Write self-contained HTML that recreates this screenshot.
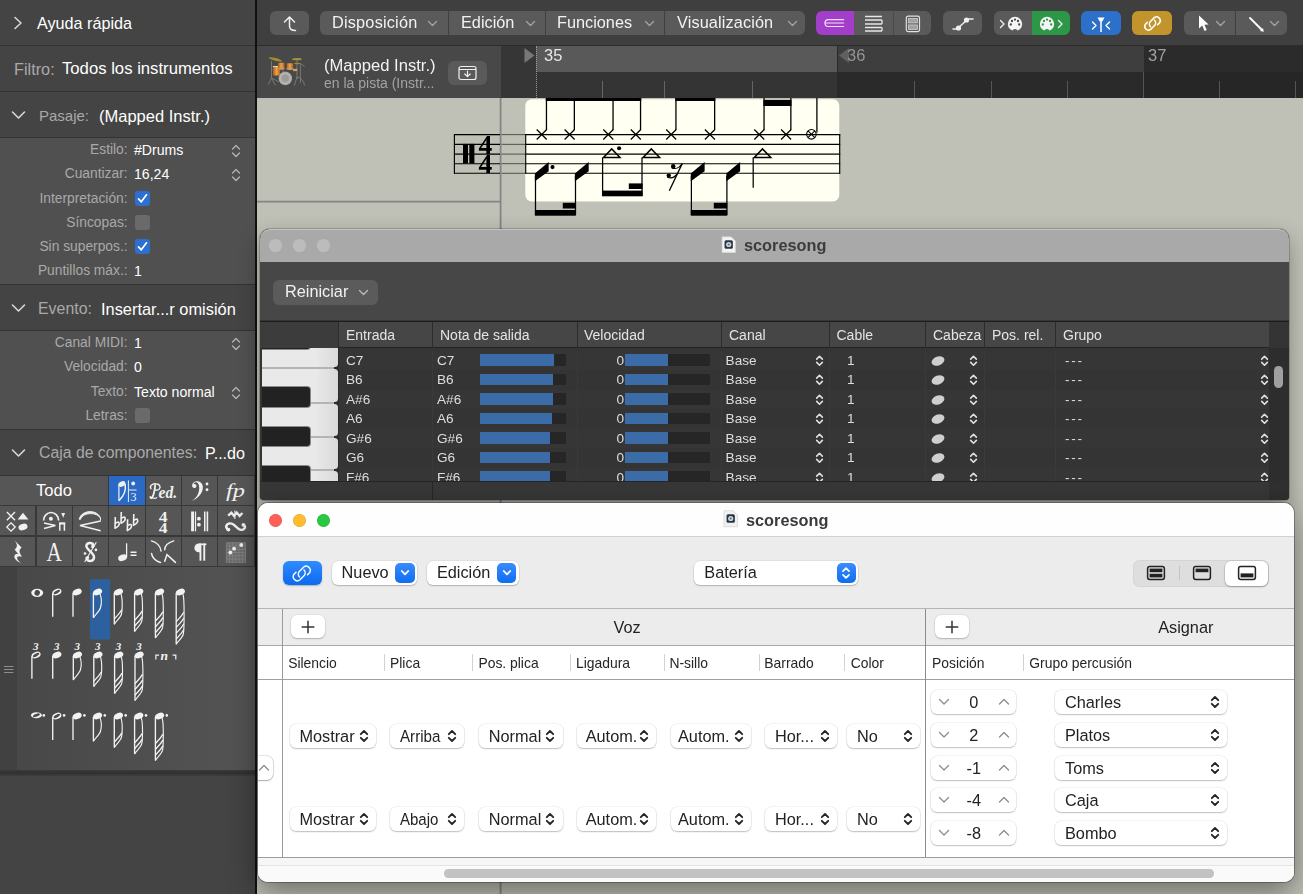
<!DOCTYPE html>
<html>
<head>
<meta charset="utf-8">
<style>
*{box-sizing:border-box;margin:0;padding:0}
html,body{width:1303px;height:894px;overflow:hidden;background:#bfc1b6;font-family:"Liberation Sans",sans-serif;}
.abs{position:absolute}
#root{position:fixed;left:0;top:0;width:1303px;height:894px;overflow:hidden}
/* ---------- left inspector ---------- */
#left{position:absolute;left:0;top:0;width:255px;height:894px;background:#444444;color:#fff}
#leftborder{position:absolute;left:255px;top:0;width:2px;height:894px;background:#111}
.lhdr{position:absolute;left:0;width:255px;height:46px;background:#444;border-bottom:1px solid #333}
.lhdr .t{position:absolute;top:0;line-height:46px;font-size:16px;white-space:nowrap}
.lhdr.d1 .t{top:1px}
.gray{color:#a9a9a9}
.prow{position:absolute;left:0;width:255px;height:24px;font-size:13.8px;line-height:24px}
.prow .l{position:absolute;right:127.4px;top:0;color:#a9a9a9;white-space:nowrap}
.prow .v{position:absolute;left:134px;top:0;color:#fff;white-space:nowrap;font-size:14.1px}
.pbg{position:absolute;left:0;width:255px;background:#505050}
.cb{position:absolute;left:135px;width:15px;height:15px;border-radius:3px}
.cb svg{display:block;position:absolute;left:0;top:0}
.cb.on{background:#2d6fd0}
.cb.off{background:#6a6a6a}

#partbox{position:absolute;left:0;top:476px;width:255px;height:91px;background:#383838}
.pc{position:absolute;background:#565656;height:29px;overflow:hidden}
.pc.sel{background:#2a6ac6}
.pc svg{position:absolute;left:0;top:0}
#notes{position:absolute;left:0;top:567px;width:255px;height:204px;background:linear-gradient(90deg,#474747,#545454)}
#notes .strip{position:absolute;left:0;top:0;width:17px;height:204px;background:#414141}
#notesep{position:absolute;left:0;top:770px;width:255px;height:6px;background:linear-gradient(#3a3a3a,#303030 50%,#3e3e3e)}
/* ---------- main ---------- */
#toolbar .seg{position:absolute;top:10.6px;height:24.4px;background:#5a5a5a;color:#f2f2f2;font-size:16.3px;line-height:24.4px;white-space:nowrap}
#toolbar .t{position:absolute;top:-1px}
#hdr{position:absolute;left:0;top:45px;width:244px;height:53px;background:#484848;border-top:1px solid #2e2e2e}
#ruler{position:absolute;left:244px;top:45px;width:802px;height:53px;background:#2a2a2a;overflow:hidden}
#score{position:absolute;left:0;top:98px;width:1046px;height:796px;background:#bfc1b6}
.win{position:absolute;overflow:hidden}
#w2{left:3px;top:229px;width:1029px;height:271px;border-radius:10px 10px 4px 4px;background:#353535;box-shadow:0 0 0 1px rgba(0,0,0,.18),0 8px 22px rgba(0,0,0,.32)}
#w2 .title{position:absolute;left:0;top:0;width:100%;height:33px;background:#a9a9a9;border-radius:10px 10px 0 0;box-shadow:inset 0 1px 0 #c4c4c4}
#w2 .tl{position:absolute;top:10px;width:12.6px;height:12.6px;border-radius:50%;background:#bcbcbc}
#w2 .bar{position:absolute;left:0;top:33px;width:100%;height:58px;background:#474747}
#w2 .th{position:absolute;left:0;top:92px;width:100%;height:27px;background:#464646;border-top:1px solid #1e1e1e;border-bottom:1px solid #242424}
#w2 .th span{position:absolute;top:0;line-height:26px;font-size:14px;color:#e4e4e4;white-space:nowrap}
#w2 .th i{position:absolute;top:0;width:1px;height:26px;background:#2c2c2c}
#w2 .row{position:absolute;left:79px;width:931px;height:19.45px;font-size:13.6px;color:#dedede;line-height:20px}
#w2 .row span{position:absolute;top:0;white-space:nowrap}
#w2 .row b{position:absolute;display:block}

#w3{left:1px;top:503px;width:1036px;height:379px;border-radius:10px;background:#fff;box-shadow:0 0 0 1px rgba(0,0,0,.28),0 10px 30px rgba(0,0,0,.45)}
#w3 .title{position:absolute;left:0;top:0;width:100%;height:34px;background:#fefefe;border-bottom:1px solid #d0d0d0}
#w3 .tl{position:absolute;top:10.5px;width:13px;height:13px;border-radius:50%}
#w3 .bar{position:absolute;left:0;top:34px;width:100%;height:72px;background:#ececec}
#w3 .sec{position:absolute;left:0;top:104.9px;width:100%;height:38.1px;background:#ececec;border-top:1.5px solid #b4b4b4;border-bottom:1px solid #a9a9a9}
#w3 .ch{position:absolute;left:0;top:143px;width:100%;height:34px;background:#fff;border-bottom:1px solid #a0a0a0}
#w3 .ch span{position:absolute;top:0;line-height:34px;font-size:13.9px;color:#262626;white-space:nowrap}
#w3 .ch i{position:absolute;top:8px;width:1px;height:17px;background:#d2d2d2}
.pop{position:absolute;height:24px;background:#fff;border-radius:6px;box-shadow:0 0 0 0.5px rgba(0,0,0,.09),0 1px 1.5px rgba(0,0,0,.22);font-size:16.3px;line-height:24px;color:#222;white-space:nowrap}
.pop span{position:absolute;top:0}
.pop svg{position:absolute}
.bsq{position:absolute;top:2.4px;width:19.2px;height:19.2px;border-radius:5px;background:linear-gradient(#3a8cff,#0f6df0)}
.ud2{position:absolute;top:3px;width:9px;height:13.5px}


#main{position:absolute;left:257px;top:0;width:1046px;height:894px}
#toolbar{position:absolute;left:0;top:0;width:1046px;height:45px;background:#3f3f3f}
.tb{position:absolute;top:10px;height:25px;background:#5b5b5b;border-radius:6px;color:#fff;font-size:16px;line-height:25px}
</style>
</head>
<body>
<div id="root">

<!-- LEFT INSPECTOR -->
<div id="left">
<!-- header rows -->
<div class="lhdr" style="top:0"><svg class="abs" style="left:13px;top:16px" width="10" height="14" viewBox="0 0 10 14"><path d="M2 1.5 L8 7 L2 12.5" fill="none" stroke="#d8d8d8" stroke-width="1.6" stroke-linecap="round" stroke-linejoin="round"/></svg><span class="t" style="left:37px;font-size:16.2px">Ayuda rápida</span></div>
<div class="lhdr" style="top:46px"><span class="t gray" style="left:14px;font-size:16.3px">Filtro:</span><span class="t" style="left:62px;font-size:16.7px">Todos los instrumentos</span></div>
<div class="lhdr d1" style="top:92px"><svg class="abs" style="left:11px;top:18px" width="15" height="10" viewBox="0 0 15 10"><path d="M1.5 2 L7.5 8 L13.5 2" fill="none" stroke="#d8d8d8" stroke-width="1.6" stroke-linecap="round" stroke-linejoin="round"/></svg><span class="t gray" style="left:39px;font-size:15px">Pasaje:</span><span class="t" style="left:99px;font-size:16.5px">(Mapped Instr.)</span></div>

<div class="pbg" style="top:138px;height:146px"></div>
<div class="prow" style="top:138px"><span class="l">Estilo:</span><span class="v">#Drums</span><svg class="abs ud" style="left:231px;top:6px" width="10" height="14" viewBox="0 0 10 14"><path d="M1.5 5 L5 1.5 L8.5 5 M1.5 9 L5 12.5 L8.5 9" fill="none" stroke="#b5b5b5" stroke-width="1.3" stroke-linecap="round" stroke-linejoin="round"/></svg></div>
<div class="prow" style="top:162px"><span class="l">Cuantizar:</span><span class="v">16,24</span><svg class="abs ud" style="left:231px;top:6px" width="10" height="14" viewBox="0 0 10 14"><path d="M1.5 5 L5 1.5 L8.5 5 M1.5 9 L5 12.5 L8.5 9" fill="none" stroke="#b5b5b5" stroke-width="1.3" stroke-linecap="round" stroke-linejoin="round"/></svg></div>
<div class="prow" style="top:187px"><span class="l">Interpretación:</span><div class="cb on" style="top:4px"><svg width="15" height="15" viewBox="0 0 15 15"><path d="M3.5 7.8 L6.3 10.8 L11.5 3.8" fill="none" stroke="#fff" stroke-width="1.7" stroke-linecap="round" stroke-linejoin="round"/></svg></div></div>
<div class="prow" style="top:211px"><span class="l">Síncopas:</span><div class="cb off" style="top:4px"></div></div>
<div class="prow" style="top:235px"><span class="l">Sin superpos.:</span><div class="cb on" style="top:4px"><svg width="15" height="15" viewBox="0 0 15 15"><path d="M3.5 7.8 L6.3 10.8 L11.5 3.8" fill="none" stroke="#fff" stroke-width="1.7" stroke-linecap="round" stroke-linejoin="round"/></svg></div></div>
<div class="prow" style="top:259px"><span class="l">Puntillos máx.:</span><span class="v">1</span></div>

<div class="lhdr d1" style="top:284px;height:47px;border-top:1px solid #333"><svg class="abs" style="left:11px;top:18px" width="15" height="10" viewBox="0 0 15 10"><path d="M1.5 2 L7.5 8 L13.5 2" fill="none" stroke="#d8d8d8" stroke-width="1.6" stroke-linecap="round" stroke-linejoin="round"/></svg><span class="t gray" style="left:38px;font-size:15.9px">Evento:</span><span class="t" style="left:101px;font-size:16.4px">Insertar...r omisión</span></div>

<div class="pbg" style="top:331px;height:98px"></div>
<div class="prow" style="top:331px"><span class="l">Canal MIDI:</span><span class="v">1</span><svg class="abs ud" style="left:231px;top:6px" width="10" height="14" viewBox="0 0 10 14"><path d="M1.5 5 L5 1.5 L8.5 5 M1.5 9 L5 12.5 L8.5 9" fill="none" stroke="#b5b5b5" stroke-width="1.3" stroke-linecap="round" stroke-linejoin="round"/></svg></div>
<div class="prow" style="top:355px"><span class="l">Velocidad:</span><span class="v">0</span></div>
<div class="prow" style="top:380px"><span class="l">Texto:</span><span class="v">Texto normal</span><svg class="abs ud" style="left:231px;top:6px" width="10" height="14" viewBox="0 0 10 14"><path d="M1.5 5 L5 1.5 L8.5 5 M1.5 9 L5 12.5 L8.5 9" fill="none" stroke="#b5b5b5" stroke-width="1.3" stroke-linecap="round" stroke-linejoin="round"/></svg></div>
<div class="prow" style="top:404px"><span class="l">Letras:</span><div class="cb off" style="top:4px"></div></div>

<div class="lhdr" style="top:429px;height:47px;border-top:1px solid #333"><svg class="abs" style="left:11px;top:18px" width="15" height="10" viewBox="0 0 15 10"><path d="M1.5 2 L7.5 8 L13.5 2" fill="none" stroke="#d8d8d8" stroke-width="1.6" stroke-linecap="round" stroke-linejoin="round"/></svg><span class="t gray" style="left:39px;font-size:15.8px">Caja de componentes:</span><span class="t" style="left:205px;font-size:16.1px">P...do</span></div>

<!-- PARTBOX -->
<div id="partbox"><div class="pc" style="left:0px;top:0px;width:108px;height:29px"><div style="position:absolute;left:0;top:0;width:108px;text-align:center;line-height:30px;font-size:16.6px;color:#fff">Todo</div></div><div class="pc sel" style="left:109px;top:0px;width:35.5px;height:29px"><svg width="36" height="30" viewBox="0 0 36 30"><path d="M9.9 8 V24.6" stroke="#f0f0f0" stroke-width="1.2" fill="none"/><ellipse cx="12.9" cy="8" rx="3.7" ry="2.5" transform="rotate(-25 12.9 8)" fill="#f0f0f0"/>
<path d="M16.2 8.4 C17 14 14.8 20 10.2 24.4" fill="none" stroke="#f0f0f0" stroke-width="1.5" stroke-linecap="round"/>
<path d="M19.4 4.4 V26" stroke="#f0f0f0" stroke-width="1"/><circle cx="24.2" cy="7.5" r="1.9" fill="#f0f0f0"/><path d="M20 14 H27.6" stroke="#f0f0f0" stroke-width="1"/>
<text x="21.6" y="25" font-family="Liberation Serif" font-size="12" fill="#f0f0f0">3</text></svg></div><div class="pc" style="left:146px;top:0px;width:35px;height:29px"><svg width="35" height="30" viewBox="0 0 35 30"><g fill="none" stroke="#f0f0f0" stroke-linecap="round"><path d="M9.2 9.2 C8.6 13.5 8.4 18 6.2 21.6 C5.4 22.6 4.2 22.2 4.4 21" stroke-width="1.8"/>
<path d="M5 12.6 C3.2 10.2 6 7.4 10 7.8 C13.6 8 15 10.6 13.4 12.8 C12.2 14.4 10 14.6 9 13.6" stroke-width="1.4"/><path d="M6.6 21.8 C8 22.6 9.6 22.6 10.6 21.6" stroke-width="1.3"/></g>
<text x="12.6" y="22.3" font-family="Liberation Serif" font-style="italic" font-weight="bold" font-size="16.5" fill="#f0f0f0" textLength="18.6" lengthAdjust="spacingAndGlyphs">ed.</text></svg></div><div class="pc" style="left:182px;top:0px;width:35px;height:29px"><svg width="35" height="30" viewBox="0 0 35 30"><path d="M10.2 10.6 C9.4 6.6 13.4 4.4 16.8 5.4 C20.6 6.6 21.6 10.6 20.4 14.4 C18.8 19.4 14.6 22.8 9.6 25.2 C14.4 22 17 17.8 17.2 12.8 C17.4 9 16.2 6.4 14.2 6.2 C12.6 6 11.6 7.2 11.6 8.2 C13.4 7.6 14.8 8.8 14.4 10.4 C13.8 12.4 10.8 12.6 10.2 10.6z" fill="#f0f0f0"/>
<circle cx="25" cy="8" r="1.45" fill="#f0f0f0"/><circle cx="25" cy="13.7" r="1.45" fill="#f0f0f0"/></svg></div><div class="pc" style="left:218px;top:0px;width:36px;height:29px"><svg width="36" height="30" viewBox="0 0 36 30"><text x="8" y="20.6" font-family="Liberation Serif" font-style="italic" font-size="19.5" fill="#f0f0f0" textLength="19" lengthAdjust="spacingAndGlyphs">fp</text></svg></div><div class="pc" style="left:0px;top:30.3px;width:35px;height:28.8px"><svg width="35" height="29" viewBox="0 0 35 29"><path d="M6.9 6 L15 14.2 M15 6 L6.9 14.2" stroke="#f0f0f0" stroke-width="1.4"/><path d="M17.6 13.6 L23 6.7 L28.4 13.6z" fill="#f0f0f0"/>
<path d="M11 16.8 L15.2 21 L11 25.2 L6.8 21z" fill="none" stroke="#f0f0f0" stroke-width="1.3"/><ellipse cx="23" cy="21" rx="4.6" ry="3.2" transform="rotate(-15 23 21)" fill="#f0f0f0"/></svg></div><div class="pc" style="left:37px;top:30.3px;width:35px;height:28.8px"><svg width="35" height="29" viewBox="0 0 35 29"><path d="M6.6 14.4 A7.5 7.9 0 0 1 21.6 14.4" fill="none" stroke="#f0f0f0" stroke-width="1.7"/><circle cx="13.9" cy="12.7" r="2" fill="#f0f0f0"/>
<path d="M7 17 L18.4 19.6 L7 22.4" fill="none" stroke="#f0f0f0" stroke-width="1.5"/><path d="M24.3 6.9 h3.8 l-1.9 4.8z" fill="#f0f0f0"/>
<path d="M22.8 24.8 V17.6 H27.4 V24.8" fill="none" stroke="#f0f0f0" stroke-width="1.5"/><path d="M22 17.4 H28.2" stroke="#f0f0f0" stroke-width="2"/></svg></div><div class="pc" style="left:73px;top:30.3px;width:35px;height:28.8px"><svg width="35" height="29" viewBox="0 0 35 29"><path d="M6.2 13.2 C8.5 3.4 25 3 27.6 12.6 C24.4 5.6 9.8 6 7.4 13.4z" fill="#f0f0f0" stroke="#f0f0f0" stroke-width="0.9" stroke-linejoin="round"/><path d="M27.5 12 V14.8" stroke="#f0f0f0" stroke-width="1"/>
<path d="M27.6 15 L7 19.6 L27.6 24.8" fill="none" stroke="#f0f0f0" stroke-width="1.5" stroke-linejoin="miter"/></svg></div><div class="pc" style="left:109px;top:30.3px;width:35.5px;height:28.8px"><svg width="36" height="29" viewBox="0 0 36 29"><path d="M6.3 11 L6 22.3 C9 20.8 10.6 18.6 10.1 17 C9.6 15.6 7.4 16 6.1 17.8" fill="none" stroke="#f0f0f0" stroke-width="1.6" stroke-linejoin="round"/><path d="M12.3 6 L12 17.3 C15 15.8 16.6 13.6 16.1 12 C15.6 10.6 13.4 11 12.1 12.8" fill="none" stroke="#f0f0f0" stroke-width="1.6" stroke-linejoin="round"/><path d="M18.6 13.3 L18.3 24.6 C21.3 23.1 22.9 20.9 22.4 19.3 C21.900000000000002 17.9 19.7 18.3 18.400000000000002 20.1" fill="none" stroke="#f0f0f0" stroke-width="1.6" stroke-linejoin="round"/><path d="M24.8 8 L24.5 19.3 C27.5 17.8 29.1 15.6 28.6 14 C28.1 12.6 25.9 13 24.6 14.8" fill="none" stroke="#f0f0f0" stroke-width="1.6" stroke-linejoin="round"/></svg></div><div class="pc" style="left:146px;top:30.3px;width:35px;height:28.8px"><svg width="35" height="29" viewBox="0 0 35 29"><text x="12.8" y="15.7" font-family="Liberation Serif" font-weight="bold" font-size="14.2" fill="#f0f0f0" textLength="8.8" lengthAdjust="spacingAndGlyphs">4</text><text x="12.8" y="26.5" font-family="Liberation Serif" font-weight="bold" font-size="14.2" fill="#f0f0f0" textLength="8.8" lengthAdjust="spacingAndGlyphs">4</text></svg></div><div class="pc" style="left:182px;top:30.3px;width:35px;height:28.8px"><svg width="35" height="29" viewBox="0 0 35 29"><rect x="9.1" y="5.5" width="2.9" height="19.8" fill="#f0f0f0"/><rect x="12.9" y="5.5" width="1.2" height="19.8" fill="#f0f0f0"/><circle cx="16.9" cy="12.7" r="1.9" fill="#f0f0f0"/><circle cx="16.9" cy="18.7" r="1.9" fill="#f0f0f0"/><rect x="22" y="5.5" width="1.5" height="19.8" fill="#f0f0f0"/><rect x="24.6" y="5.5" width="1.6" height="19.8" fill="#f0f0f0"/></svg></div><div class="pc" style="left:218px;top:30.3px;width:36px;height:28.8px"><svg width="36" height="29" viewBox="0 0 36 29"><path d="M10.2 9.6 L13.4 6.6 L16 10 L18.8 6.6 L21.6 10 L24.4 7" fill="none" stroke="#f0f0f0" stroke-width="2.3" stroke-linejoin="miter"/><path d="M16.9 4.6 V13" stroke="#f0f0f0" stroke-width="1.1"/>
<path d="M9.2 23 C6.4 19.6 10.4 16 14.6 18 C17.4 19.4 19 22.6 22 23.6 C25.6 24.8 28 21.6 26.4 19.4" fill="none" stroke="#f0f0f0" stroke-width="2.4" stroke-linecap="round"/>
<circle cx="10.4" cy="23.6" r="1.9" fill="#f0f0f0"/><circle cx="25.4" cy="18.8" r="1.9" fill="#f0f0f0"/></svg></div><div class="pc" style="left:0px;top:61px;width:35px;height:28.8px"><svg width="35" height="29" viewBox="0 0 35 29"><path d="M14.6 3.4 L21.6 10.6 C19 13 18.6 15 22 19.8 C19 18.6 16.6 19.4 17.2 21.6 C17.6 23.2 19.2 24.6 21 26.2 C16.4 24.4 13.4 21.2 14.6 18.6 C15.4 17 17.2 16.8 18.6 17.4 L14.6 12.6 C17.6 10.2 17.8 7.6 14.6 3.4z" fill="#f0f0f0"/></svg></div><div class="pc" style="left:37px;top:61px;width:35px;height:28.8px"><svg width="35" height="29" viewBox="0 0 35 29"><text transform="translate(9.6 24) scale(0.8 1)" font-family="Liberation Serif" font-size="26.6" fill="#f0f0f0">A</text></svg></div><div class="pc" style="left:73px;top:61px;width:35px;height:28.8px"><svg width="35" height="29" viewBox="0 0 35 29"><path d="M20.4 9 C20.6 5.4 14.2 4.6 13.4 8.6 C12.6 13 21.6 15.4 21 20.6 C20.4 25.2 13.6 24.8 13.6 21" fill="none" stroke="#f0f0f0" stroke-width="2.5" stroke-linecap="round"/>
<circle cx="19.6" cy="9.6" r="1.6" fill="#f0f0f0"/><circle cx="14.6" cy="20.6" r="1.6" fill="#f0f0f0"/>
<path d="M23.3 5.2 L11.7 25" stroke="#f0f0f0" stroke-width="1.1"/><circle cx="22.9" cy="12.9" r="1.35" fill="#f0f0f0"/><circle cx="12" cy="16.5" r="1.35" fill="#f0f0f0"/></svg></div><div class="pc" style="left:109px;top:61px;width:35.5px;height:28.8px"><svg width="36" height="29" viewBox="0 0 36 29"><path d="M17.6 6.3 V20.2" stroke="#f0f0f0" stroke-width="1.3"/><ellipse cx="13.6" cy="20.7" rx="4.6" ry="3.1" transform="rotate(-22 13.6 20.7)" fill="#f0f0f0"/><path d="M21.5 15.2 h6 M21.5 18.2 h6" stroke="#f0f0f0" stroke-width="1.4"/></svg></div><div class="pc" style="left:146px;top:61px;width:35px;height:28.8px"><svg width="35" height="29" viewBox="0 0 35 29"><g fill="none" stroke="#f0f0f0" stroke-width="1.5" stroke-linecap="round"><path d="M5.5 3.9 C10.6 5.4 14.6 9.4 15 14"/><path d="M27.7 3.9 C22.6 5.4 18.8 8.6 18.7 12.8"/><path d="M5.5 16.4 C6.2 21 10 24.6 14.5 25.4"/><path d="M18.7 24.2 L21 17.6 L29.4 25.4"/></g></svg></div><div class="pc" style="left:182px;top:61px;width:35px;height:28.8px"><svg width="35" height="29" viewBox="0 0 35 29"><path d="M17.4 6.5 h7 v1.7 h-7z" fill="#f0f0f0"/><rect x="17.5" y="6.5" width="1.9" height="17.2" fill="#f0f0f0"/><rect x="21.3" y="6.5" width="1.9" height="17.2" fill="#f0f0f0"/><path d="M18 6.5 h-1.2 a4.4 4.4 0 0 0 0 8.8 h1.2z" fill="#f0f0f0"/></svg></div><div class="pc" style="left:218px;top:61px;width:36px;height:28.8px"><svg width="36" height="29" viewBox="0 0 36 29"><rect x="8.3" y="5.7" width="19.2" height="19.7" fill="#6c6c6c"/><path d="M8.3 5.7 v19.7" stroke="#858585" stroke-width="0.8"/><path d="M8.3 5.7 h19.2" stroke="#858585" stroke-width="0.8"/><path d="M11.5 5.7 v19.7" stroke="#858585" stroke-width="0.8"/><path d="M8.3 9.0 h19.2" stroke="#858585" stroke-width="0.8"/><path d="M14.7 5.7 v19.7" stroke="#858585" stroke-width="0.8"/><path d="M8.3 12.3 h19.2" stroke="#858585" stroke-width="0.8"/><path d="M17.9 5.7 v19.7" stroke="#858585" stroke-width="0.8"/><path d="M8.3 15.5 h19.2" stroke="#858585" stroke-width="0.8"/><path d="M21.1 5.7 v19.7" stroke="#858585" stroke-width="0.8"/><path d="M8.3 18.8 h19.2" stroke="#858585" stroke-width="0.8"/><path d="M24.3 5.7 v19.7" stroke="#858585" stroke-width="0.8"/><path d="M8.3 22.1 h19.2" stroke="#858585" stroke-width="0.8"/><path d="M27.5 5.7 v19.7" stroke="#858585" stroke-width="0.8"/><path d="M8.3 25.4 h19.2" stroke="#858585" stroke-width="0.8"/><circle cx="23.3" cy="8" r="1.9" fill="#f0f0f0"/><circle cx="16.1" cy="11.7" r="1.9" fill="#f0f0f0"/><circle cx="12.3" cy="15.5" r="1.9" fill="#f0f0f0"/></svg></div></div>
<!-- NOTES -->
<div id="notes"><div class="strip"></div><svg class="abs" style="left:0;top:0" width="255" height="204" viewBox="0 0 255 204"><rect x="90" y="12.3" width="20.2" height="60.3" rx="2" fill="#2d609f"/><ellipse cx="37.2" cy="25.799999999999955" rx="6" ry="4.1" fill="#f2f2f2"/><ellipse cx="37.2" cy="25.799999999999955" rx="2.7" ry="2.9" transform="rotate(25 37.2 25.799999999999955)" fill="#4b4b4b"/><path d="M52.7 26 V49.7" stroke="#f2f2f2" stroke-width="1.35" fill="none"/><ellipse cx="56.900000000000006" cy="25" rx="4.7" ry="3.1" transform="rotate(-22 56.900000000000006 25)" fill="#f2f2f2"/><ellipse cx="56.900000000000006" cy="25" rx="3.5" ry="1.35" transform="rotate(-28 56.900000000000006 25)" fill="#4d4d4d"/><path d="M73 26 V49.7" stroke="#f2f2f2" stroke-width="1.35" fill="none"/><ellipse cx="77.2" cy="25" rx="4.7" ry="3.1" transform="rotate(-22 77.2 25)" fill="#f2f2f2"/><path d="M93.4 26 V50.8" stroke="#f2f2f2" stroke-width="1.35" fill="none"/><ellipse cx="97.60000000000001" cy="25" rx="4.7" ry="3.1" transform="rotate(-22 97.60000000000001 25)" fill="#f2f2f2"/><path d="M100.2 27.4 C101.80000000000001 32 101.50000000000001 37.3 100.4 41.0 C99.4 44.4 95.0 47.8 93.60000000000001 50.5" fill="none" stroke="#f2f2f2" stroke-width="1.15" stroke-linecap="round"/><path d="M114.3 26 V57.3" stroke="#f2f2f2" stroke-width="1.35" fill="none"/><ellipse cx="118.5" cy="25" rx="4.7" ry="3.1" transform="rotate(-22 118.5 25)" fill="#f2f2f2"/><path d="M121.1 27.4 C122.7 32 122.4 43.8 121.3 47.5 C120.3 50.9 115.89999999999999 54.3 114.5 57.0" fill="none" stroke="#f2f2f2" stroke-width="1.15" stroke-linecap="round"/><path d="M114.6 51.55 C116.89999999999999 48.949999999999996 119.7 46.55 121.6 42.949999999999996" fill="none" stroke="#f2f2f2" stroke-width="1.3" stroke-linecap="round"/><path d="M134.6 26 V64.5" stroke="#f2f2f2" stroke-width="1.35" fill="none"/><ellipse cx="138.79999999999998" cy="25" rx="4.7" ry="3.1" transform="rotate(-22 138.79999999999998 25)" fill="#f2f2f2"/><path d="M141.39999999999998 27.4 C142.99999999999997 32 142.7 51.0 141.6 54.7 C140.6 58.1 136.2 61.5 134.79999999999998 64.2" fill="none" stroke="#f2f2f2" stroke-width="1.15" stroke-linecap="round"/><path d="M134.9 58.75 C137.2 56.15 140.0 53.75 141.89999999999998 50.15" fill="none" stroke="#f2f2f2" stroke-width="1.3" stroke-linecap="round"/><path d="M134.9 53.0 C137.2 50.4 140.0 48.0 141.89999999999998 44.4" fill="none" stroke="#f2f2f2" stroke-width="1.3" stroke-linecap="round"/><path d="M155.4 26 V71" stroke="#f2f2f2" stroke-width="1.35" fill="none"/><ellipse cx="159.6" cy="25" rx="4.7" ry="3.1" transform="rotate(-22 159.6 25)" fill="#f2f2f2"/><path d="M162.2 27.4 C163.79999999999998 32 163.5 57.5 162.4 61.2 C161.4 64.6 157.0 68 155.6 70.7" fill="none" stroke="#f2f2f2" stroke-width="1.15" stroke-linecap="round"/><path d="M155.70000000000002 65.25 C158.0 62.65 160.8 60.25 162.7 56.65" fill="none" stroke="#f2f2f2" stroke-width="1.3" stroke-linecap="round"/><path d="M155.70000000000002 59.5 C158.0 56.9 160.8 54.5 162.7 50.9" fill="none" stroke="#f2f2f2" stroke-width="1.3" stroke-linecap="round"/><path d="M155.70000000000002 53.75 C158.0 51.15 160.8 48.75 162.7 45.15" fill="none" stroke="#f2f2f2" stroke-width="1.3" stroke-linecap="round"/><path d="M176.2 26 V77.3" stroke="#f2f2f2" stroke-width="1.35" fill="none"/><ellipse cx="180.39999999999998" cy="25" rx="4.7" ry="3.1" transform="rotate(-22 180.39999999999998 25)" fill="#f2f2f2"/><path d="M182.99999999999997 27.4 C184.59999999999997 32 184.29999999999998 63.8 183.2 67.5 C182.2 70.89999999999999 177.79999999999998 74.3 176.39999999999998 77.0" fill="none" stroke="#f2f2f2" stroke-width="1.15" stroke-linecap="round"/><path d="M176.5 71.55 C178.79999999999998 68.95 181.6 66.55 183.49999999999997 62.949999999999996" fill="none" stroke="#f2f2f2" stroke-width="1.3" stroke-linecap="round"/><path d="M176.5 65.8 C178.79999999999998 63.199999999999996 181.6 60.8 183.49999999999997 57.199999999999996" fill="none" stroke="#f2f2f2" stroke-width="1.3" stroke-linecap="round"/><path d="M176.5 60.05 C178.79999999999998 57.449999999999996 181.6 55.05 183.49999999999997 51.449999999999996" fill="none" stroke="#f2f2f2" stroke-width="1.3" stroke-linecap="round"/><path d="M176.5 54.3 C178.79999999999998 51.699999999999996 181.6 49.3 183.49999999999997 45.699999999999996" fill="none" stroke="#f2f2f2" stroke-width="1.3" stroke-linecap="round"/><path d="M31.9 89 V111.7" stroke="#f2f2f2" stroke-width="1.35" fill="none"/><ellipse cx="36.1" cy="88" rx="4.7" ry="3.1" transform="rotate(-22 36.1 88)" fill="#f2f2f2"/><ellipse cx="36.1" cy="88" rx="3.5" ry="1.35" transform="rotate(-28 36.1 88)" fill="#4d4d4d"/><text x="33.1" y="83.29999999999995" font-family="Liberation Serif" font-style="italic" font-weight="bold" font-size="11" fill="#f2f2f2">3</text><path d="M52.7 89 V111.7" stroke="#f2f2f2" stroke-width="1.35" fill="none"/><ellipse cx="56.900000000000006" cy="88" rx="4.7" ry="3.1" transform="rotate(-22 56.900000000000006 88)" fill="#f2f2f2"/><text x="53.900000000000006" y="83.29999999999995" font-family="Liberation Serif" font-style="italic" font-weight="bold" font-size="11" fill="#f2f2f2">3</text><path d="M73.3 89 V113" stroke="#f2f2f2" stroke-width="1.35" fill="none"/><ellipse cx="77.5" cy="88" rx="4.7" ry="3.1" transform="rotate(-22 77.5 88)" fill="#f2f2f2"/><path d="M80.1 90.4 C81.7 95 81.4 99.5 80.3 103.2 C79.3 106.6 74.89999999999999 110 73.5 112.7" fill="none" stroke="#f2f2f2" stroke-width="1.15" stroke-linecap="round"/><text x="74.5" y="83.29999999999995" font-family="Liberation Serif" font-style="italic" font-weight="bold" font-size="11" fill="#f2f2f2">3</text><path d="M93.8 89 V119.6" stroke="#f2f2f2" stroke-width="1.35" fill="none"/><ellipse cx="98.0" cy="88" rx="4.7" ry="3.1" transform="rotate(-22 98.0 88)" fill="#f2f2f2"/><path d="M100.6 90.4 C102.2 95 101.9 106.1 100.8 109.8 C99.8 113.19999999999999 95.39999999999999 116.6 94.0 119.3" fill="none" stroke="#f2f2f2" stroke-width="1.15" stroke-linecap="round"/><path d="M94.1 113.85 C96.39999999999999 111.25 99.2 108.85 101.1 105.25" fill="none" stroke="#f2f2f2" stroke-width="1.3" stroke-linecap="round"/><text x="95.0" y="83.29999999999995" font-family="Liberation Serif" font-style="italic" font-weight="bold" font-size="11" fill="#f2f2f2">3</text><path d="M114.6 89 V126.5" stroke="#f2f2f2" stroke-width="1.35" fill="none"/><ellipse cx="118.8" cy="88" rx="4.7" ry="3.1" transform="rotate(-22 118.8 88)" fill="#f2f2f2"/><path d="M121.39999999999999 90.4 C123.0 95 122.7 113.0 121.6 116.7 C120.6 120.1 116.19999999999999 123.5 114.8 126.2" fill="none" stroke="#f2f2f2" stroke-width="1.15" stroke-linecap="round"/><path d="M114.89999999999999 120.75 C117.19999999999999 118.15 120.0 115.75 121.89999999999999 112.15" fill="none" stroke="#f2f2f2" stroke-width="1.3" stroke-linecap="round"/><path d="M114.89999999999999 115.0 C117.19999999999999 112.4 120.0 110.0 121.89999999999999 106.4" fill="none" stroke="#f2f2f2" stroke-width="1.3" stroke-linecap="round"/><text x="115.8" y="83.29999999999995" font-family="Liberation Serif" font-style="italic" font-weight="bold" font-size="11" fill="#f2f2f2">3</text><path d="M135 89 V133.5" stroke="#f2f2f2" stroke-width="1.35" fill="none"/><ellipse cx="139.2" cy="88" rx="4.7" ry="3.1" transform="rotate(-22 139.2 88)" fill="#f2f2f2"/><path d="M141.79999999999998 90.4 C143.39999999999998 95 143.1 120.0 142.0 123.7 C141.0 127.1 136.6 130.5 135.2 133.2" fill="none" stroke="#f2f2f2" stroke-width="1.15" stroke-linecap="round"/><path d="M135.3 127.75 C137.6 125.15 140.4 122.75 142.29999999999998 119.15" fill="none" stroke="#f2f2f2" stroke-width="1.3" stroke-linecap="round"/><path d="M135.3 122.0 C137.6 119.4 140.4 117.0 142.29999999999998 113.4" fill="none" stroke="#f2f2f2" stroke-width="1.3" stroke-linecap="round"/><path d="M135.3 116.25 C137.6 113.65 140.4 111.25 142.29999999999998 107.65" fill="none" stroke="#f2f2f2" stroke-width="1.3" stroke-linecap="round"/><text x="136.2" y="83.29999999999995" font-family="Liberation Serif" font-style="italic" font-weight="bold" font-size="11" fill="#f2f2f2">3</text><path d="M155.9 659.6 v-4.4 h3.2 M175.8 659.6 v-4.4 h-3.2" transform="translate(0 -567)" stroke="#f2f2f2" stroke-width="1.2" fill="none"/><text x="160.6" y="92.60000000000002" font-family="Liberation Serif" font-style="italic" font-weight="bold" font-size="13.5" fill="#f2f2f2">n</text><ellipse cx="36.4" cy="148.20000000000005" rx="5.4" ry="3" fill="#f2f2f2"/><ellipse cx="36.4" cy="148.20000000000005" rx="3.6" ry="1.4" transform="rotate(-20 36.4 148.20000000000005)" fill="#4b4b4b"/><circle cx="43.8" cy="148.39999999999998" r="1.3" fill="#f2f2f2"/><path d="M52.7 150 V173" stroke="#f2f2f2" stroke-width="1.35" fill="none"/><ellipse cx="56.900000000000006" cy="149" rx="4.7" ry="3.1" transform="rotate(-22 56.900000000000006 149)" fill="#f2f2f2"/><ellipse cx="56.900000000000006" cy="149" rx="3.5" ry="1.35" transform="rotate(-28 56.900000000000006 149)" fill="#4d4d4d"/><circle cx="64.10000000000001" cy="148.39999999999998" r="1.3" fill="#f2f2f2"/><path d="M73 150 V173" stroke="#f2f2f2" stroke-width="1.35" fill="none"/><ellipse cx="77.2" cy="149" rx="4.7" ry="3.1" transform="rotate(-22 77.2 149)" fill="#f2f2f2"/><circle cx="84.4" cy="148.39999999999998" r="1.3" fill="#f2f2f2"/><path d="M93.4 150 V174.3" stroke="#f2f2f2" stroke-width="1.35" fill="none"/><ellipse cx="97.60000000000001" cy="149" rx="4.7" ry="3.1" transform="rotate(-22 97.60000000000001 149)" fill="#f2f2f2"/><path d="M100.2 151.4 C101.80000000000001 156 101.50000000000001 160.8 100.4 164.5 C99.4 167.9 95.0 171.3 93.60000000000001 174.0" fill="none" stroke="#f2f2f2" stroke-width="1.15" stroke-linecap="round"/><circle cx="104.80000000000001" cy="148.39999999999998" r="1.3" fill="#f2f2f2"/><path d="M114.3 150 V180.5" stroke="#f2f2f2" stroke-width="1.35" fill="none"/><ellipse cx="118.5" cy="149" rx="4.7" ry="3.1" transform="rotate(-22 118.5 149)" fill="#f2f2f2"/><path d="M121.1 151.4 C122.7 156 122.4 167.0 121.3 170.7 C120.3 174.1 115.89999999999999 177.5 114.5 180.2" fill="none" stroke="#f2f2f2" stroke-width="1.15" stroke-linecap="round"/><path d="M114.6 174.75 C116.89999999999999 172.15 119.7 169.75 121.6 166.15" fill="none" stroke="#f2f2f2" stroke-width="1.3" stroke-linecap="round"/><circle cx="125.7" cy="148.39999999999998" r="1.3" fill="#f2f2f2"/><path d="M134.6 150 V187" stroke="#f2f2f2" stroke-width="1.35" fill="none"/><ellipse cx="138.79999999999998" cy="149" rx="4.7" ry="3.1" transform="rotate(-22 138.79999999999998 149)" fill="#f2f2f2"/><path d="M141.39999999999998 151.4 C142.99999999999997 156 142.7 173.5 141.6 177.2 C140.6 180.6 136.2 184 134.79999999999998 186.7" fill="none" stroke="#f2f2f2" stroke-width="1.15" stroke-linecap="round"/><path d="M134.9 181.25 C137.2 178.65 140.0 176.25 141.89999999999998 172.65" fill="none" stroke="#f2f2f2" stroke-width="1.3" stroke-linecap="round"/><path d="M134.9 175.5 C137.2 172.9 140.0 170.5 141.89999999999998 166.9" fill="none" stroke="#f2f2f2" stroke-width="1.3" stroke-linecap="round"/><circle cx="146.0" cy="148.39999999999998" r="1.3" fill="#f2f2f2"/><path d="M155.4 150 V193.5" stroke="#f2f2f2" stroke-width="1.35" fill="none"/><ellipse cx="159.6" cy="149" rx="4.7" ry="3.1" transform="rotate(-22 159.6 149)" fill="#f2f2f2"/><path d="M162.2 151.4 C163.79999999999998 156 163.5 180.0 162.4 183.7 C161.4 187.1 157.0 190.5 155.6 193.2" fill="none" stroke="#f2f2f2" stroke-width="1.15" stroke-linecap="round"/><path d="M155.70000000000002 187.75 C158.0 185.15 160.8 182.75 162.7 179.15" fill="none" stroke="#f2f2f2" stroke-width="1.3" stroke-linecap="round"/><path d="M155.70000000000002 182.0 C158.0 179.4 160.8 177.0 162.7 173.4" fill="none" stroke="#f2f2f2" stroke-width="1.3" stroke-linecap="round"/><path d="M155.70000000000002 176.25 C158.0 173.65 160.8 171.25 162.7 167.65" fill="none" stroke="#f2f2f2" stroke-width="1.3" stroke-linecap="round"/><circle cx="166.8" cy="148.39999999999998" r="1.3" fill="#f2f2f2"/><path d="M4 99.5 h9.5 M4 102.5 h9.5 M4 105.5 h9.5" stroke="#8e8e8e" stroke-width="1"/></svg></div>
<div id="notesep"></div>
</div>
<div id="leftborder"></div>

<!-- MAIN -->
<div id="main">
  <div id="toolbar"><div class="seg" style="left:13px;width:39px;background:#5a5a5a;border-radius:6px"><svg class="abs" style="left:11px;top:3px" width="18" height="19" viewBox="0 0 18 19"><path d="M3.5 8 L8.5 3 L13.5 8 M8.5 3.5 V12 C8.5 15 10.5 16.5 14.5 16.5" fill="none" stroke="#f0f0f0" stroke-width="1.5" stroke-linecap="round" stroke-linejoin="round"/></svg></div><div class="seg" style="left:63px;width:128px;background:#5a5a5a;border-radius:6px 0 0 6px"><span class="t" style="left:12px;letter-spacing:0.2px">Disposición</span><svg class="abs" style="left:107px;top:9px" width="11" height="8" viewBox="0 0 11 8"><path d="M1.5 1.5 L5.5 5.5 L9.5 1.5" fill="none" stroke="#a2a2a2" stroke-width="1.4" stroke-linecap="round" stroke-linejoin="round"/></svg></div><div class="seg" style="left:192px;width:96px;background:#5a5a5a;border-radius:0"><span class="t" style="left:12px">Edición</span><svg class="abs" style="left:76px;top:9px" width="11" height="8" viewBox="0 0 11 8"><path d="M1.5 1.5 L5.5 5.5 L9.5 1.5" fill="none" stroke="#a2a2a2" stroke-width="1.4" stroke-linecap="round" stroke-linejoin="round"/></svg></div><div class="seg" style="left:289px;width:118px;background:#5a5a5a;border-radius:0"><span class="t" style="left:11px">Funciones</span><svg class="abs" style="left:98px;top:9px" width="11" height="8" viewBox="0 0 11 8"><path d="M1.5 1.5 L5.5 5.5 L9.5 1.5" fill="none" stroke="#a2a2a2" stroke-width="1.4" stroke-linecap="round" stroke-linejoin="round"/></svg></div><div class="seg" style="left:408px;width:140px;background:#5a5a5a;border-radius:0 6px 6px 0"><span class="t" style="left:12px;letter-spacing:0.12px">Visualización</span><svg class="abs" style="left:122px;top:9px" width="11" height="8" viewBox="0 0 11 8"><path d="M1.5 1.5 L5.5 5.5 L9.5 1.5" fill="none" stroke="#a2a2a2" stroke-width="1.4" stroke-linecap="round" stroke-linejoin="round"/></svg></div><div class="seg" style="left:559px;width:38px;background:#a33ecb;border-radius:6px 0 0 6px"><svg class="abs" style="left:8px;top:7px" width="22" height="11" viewBox="0 0 22 11"><path d="M19.6 1.6 H4.4 a3.4 3.4 0 0 0 0 6.9 H19.6 M1.2 5 H19.6" fill="none" stroke="#f3e2fb" stroke-width="1.15" stroke-linecap="round"/></svg></div><div class="seg" style="left:597px;width:40px;background:#5a5a5a;border-radius:0"><svg class="abs" style="left:10px;top:4px" width="20" height="18" viewBox="0 0 20 18"><path d="M1 1.5 h17 M1 5 h17 M1 9 h17 M1 12.5 h17 M1 16 h17" stroke="#e6e6e6" stroke-width="1.3"/><path d="M18 5 v4 M18 12.5 v3.5" stroke="#e6e6e6" stroke-width="1.3"/></svg></div><div class="seg" style="left:637px;width:37px;background:#5a5a5a;border-radius:0 6px 6px 0"><svg class="abs" style="left:10.5px;top:4px" width="16" height="18" viewBox="0 0 16 18"><rect x="1.3" y="1.2" width="13.2" height="15.4" rx="1.8" fill="none" stroke="#e2e2e2" stroke-width="1.2"/><rect x="3.3" y="3.4" width="9.2" height="4.6" fill="#a2a2a2" stroke="#d8d8d8" stroke-width="0.7"/><rect x="3.3" y="9.9" width="9.2" height="4.6" fill="#a2a2a2" stroke="#d8d8d8" stroke-width="0.7"/></svg></div><div class="abs" style="left:636px;top:10px;width:1px;height:25px;background:#4a4a4a"></div><div class="seg" style="left:686px;width:39px;background:#5a5a5a;border-radius:6px"><svg class="abs" style="left:8px;top:4px" width="24" height="18" viewBox="0 0 24 18"><path d="M2 14 h4 L17 4 h5" fill="none" stroke="#f0f0f0" stroke-width="1.5" stroke-linecap="round"/><circle cx="7.5" cy="13" r="2.6" fill="#f0f0f0"/><circle cx="15.5" cy="5" r="2.6" fill="#f0f0f0"/></svg></div><div class="seg" style="left:737px;width:38px;background:#5a5a5a;border-radius:6px 0 0 6px"><svg class="abs" style="left:5px;top:4px" width="30" height="18" viewBox="0 0 30 18"><path d="M1.5 5.5 L5 9 L1.5 12.5" fill="none" stroke="#f0f0f0" stroke-width="1.4" stroke-linecap="round" stroke-linejoin="round"/><g transform="translate(8,0)"><circle cx="8" cy="9" r="7.2" fill="#f4f4f4"/><circle cx="8" cy="16.6" r="2.6" fill="#5a5a5a"/><circle cx="3.8" cy="9.5" r="1.15" fill="#444"/><circle cx="5" cy="6" r="1.15" fill="#444"/><circle cx="8" cy="4.6" r="1.15" fill="#444"/><circle cx="11" cy="6" r="1.15" fill="#444"/><circle cx="12.2" cy="9.5" r="1.15" fill="#444"/></g></svg></div><div class="seg" style="left:775px;width:38px;background:#2c9746;border-radius:0 6px 6px 0"><svg class="abs" style="left:5px;top:4px" width="30" height="18" viewBox="0 0 30 18"><g transform="translate(2,0)"><circle cx="8" cy="9" r="7.2" fill="#f4f4f4"/><circle cx="8" cy="16.6" r="2.6" fill="#2c9746"/><circle cx="3.8" cy="9.5" r="1.15" fill="#2c9746"/><circle cx="5" cy="6" r="1.15" fill="#2c9746"/><circle cx="8" cy="4.6" r="1.15" fill="#2c9746"/><circle cx="11" cy="6" r="1.15" fill="#2c9746"/><circle cx="12.2" cy="9.5" r="1.15" fill="#2c9746"/></g><path d="M21.5 5.5 L25 9 L21.5 12.5" fill="none" stroke="#f0f0f0" stroke-width="1.4" stroke-linecap="round" stroke-linejoin="round"/></svg></div><div class="seg" style="left:824px;width:40px;background:#2c70c9;border-radius:6px"><svg class="abs" style="left:9px;top:3px" width="22" height="20" viewBox="0 0 22 20"><path d="M7.5 3.5 h7 l-2.2 4 h-2.6z" fill="#fff"/><path d="M11 7 v11" stroke="#fff" stroke-width="1.5"/><path d="M2.5 8 L6 11.5 L2.5 15 M19.5 8 L16 11.5 L19.5 15" fill="none" stroke="#fff" stroke-width="1.4" stroke-linecap="round" stroke-linejoin="round"/></svg></div><div class="seg" style="left:875px;width:40px;background:#c2952c;border-radius:6px"><svg class="abs" style="left:7.5px;top:1.2px" width="25" height="23" viewBox="0 0 22 20"><g fill="none" stroke="#fff" stroke-width="1.35" stroke-linecap="round"><path d="M9.2 12.8 a3.3 3.3 0 0 1 0 -4.6 l3.4 -3.4 a3.3 3.3 0 0 1 4.6 4.6 l-1.6 1.6"/><path d="M12.8 7.2 a3.3 3.3 0 0 1 0 4.6 l-3.4 3.4 a3.3 3.3 0 0 1 -4.6 -4.6 l1.6 -1.6"/></g></svg></div><div class="seg" style="left:927px;width:51px;background:#5a5a5a;border-radius:6px 0 0 6px"><svg class="abs" style="left:13px;top:3px" width="14" height="19" viewBox="0 0 14 19"><path d="M2 1.5 V14.5 L5.2 11.6 L7.6 17 L9.8 16 L7.4 10.8 L11.6 10.5z" fill="#fff"/></svg><svg class="abs" style="left:31px;top:9px" width="11" height="8" viewBox="0 0 11 8"><path d="M1.5 1.5 L5.5 5.5 L9.5 1.5" fill="none" stroke="#a2a2a2" stroke-width="1.4" stroke-linecap="round" stroke-linejoin="round"/></svg></div><div class="seg" style="left:979px;width:51px;background:#5a5a5a;border-radius:0 6px 6px 0"><svg class="abs" style="left:11px;top:4px" width="18" height="18" viewBox="0 0 18 18"><path d="M3 3 L14.5 14.5" stroke="#fff" stroke-width="1.8" stroke-linecap="round"/><path d="M13 16 l3 -3 l0.8 3.8z" fill="#fff"/></svg><svg class="abs" style="left:33px;top:9px" width="11" height="8" viewBox="0 0 11 8"><path d="M1.5 1.5 L5.5 5.5 L9.5 1.5" fill="none" stroke="#a2a2a2" stroke-width="1.4" stroke-linecap="round" stroke-linejoin="round"/></svg></div></div>
  <div id="hdr">
<svg class="abs" style="left:8px;top:5px" width="44" height="40" viewBox="265 50 44 40">
<defs><linearGradient id="og" x1="0" x2="1"><stop offset="0" stop-color="#a85a1c"/><stop offset=".5" stop-color="#f0a044"/><stop offset="1" stop-color="#b4651f"/></linearGradient>
<radialGradient id="kg"><stop offset="0" stop-color="#8f8f8f"/><stop offset=".55" stop-color="#a6a6a6"/><stop offset=".8" stop-color="#b9b9b9"/><stop offset="1" stop-color="#a88f72"/></radialGradient></defs>
<g stroke="#7d7d7d" stroke-width="0.9" fill="none">
<path d="M271.5 60 V77 M271.5 77 L268.3 83.5 M271.5 77 L275.3 84.3 M271.5 77 L279 81"/>
<path d="M297 58.5 V78 M300.4 62.5 V82 M297 76 L294.3 84.5 M297 76 Q303 77 304.6 84.5 M300.4 62.5 L304.6 65.5 M283 69 V75"/>
</g>
<ellipse cx="275.4" cy="58.4" rx="6.9" ry="1.35" transform="rotate(15 275.4 58.4)" fill="#a48c2e"/>
<ellipse cx="297" cy="58.2" rx="4.9" ry="1.15" fill="#a6923a"/>
<ellipse cx="297.3" cy="62.5" rx="3.4" ry="0.7" fill="#a08a38"/>
<rect x="272.9" y="65.2" width="7.2" height="9.4" rx="0.8" fill="url(#og)"/>
<rect x="272.9" y="65" width="7.2" height="1" fill="#d6d6d6"/>
<rect x="278" y="61.8" width="6.5" height="6.9" rx="0.8" fill="url(#og)"/>
<rect x="286.6" y="62.3" width="6.5" height="6.8" rx="0.8" fill="url(#og)"/>
<rect x="278" y="67" width="6.5" height="1" fill="#9aa3aa"/><rect x="286.6" y="67.2" width="6.5" height="1" fill="#9aa3aa"/>
<rect x="293" y="67.8" width="4.2" height="2.3" fill="#e09a48"/>
<circle cx="285.3" cy="77.4" r="6.8" fill="url(#kg)"/>
<circle cx="285.3" cy="77" r="3.2" fill="#9a9a9a"/>
</svg>
<div class="abs" style="left:67px;top:10px;font-size:16.6px;color:#f2f2f2;white-space:nowrap;line-height:20px">(Mapped Instr.)</div>
<div class="abs" style="left:67px;top:29px;font-size:14px;color:#a3a3a3;white-space:nowrap;line-height:16px">en la pista (Instr...</div>
<div class="abs" style="left:191px;top:15px;width:39px;height:24px;border-radius:6px;background:#5a5a5a"><svg class="abs" style="left:10px;top:4px" width="20" height="16" viewBox="0 0 20 16"><rect x="1" y="1.5" width="17" height="13" rx="2" fill="none" stroke="#f0f0f0" stroke-width="1.2"/><path d="M1 4.5 h17" stroke="#f0f0f0" stroke-width="1"/><path d="M9.5 6 v5.5 M6.8 9 l2.7 2.7 l2.7 -2.7" fill="none" stroke="#f0f0f0" stroke-width="1.2" stroke-linecap="round" stroke-linejoin="round"/></svg></div>
</div>
  <div id="ruler"><div class="abs" style="left:0;top:0;width:36px;height:53px;background:#363636"></div><div class="abs" style="left:35px;top:0;width:302px;height:27px;background:#595959"></div><div class="abs" style="left:35px;top:27px;width:302px;height:26px;background:#343434"></div><div class="abs" style="left:337px;top:0;width:306px;height:27px;background:#3e3e3e"></div><div class="abs" style="left:337px;top:27px;width:306px;height:26px;background:#2a2a2a"></div><div class="abs" style="left:643px;top:0;width:159px;height:27px;background:#2b2b2b"></div><div class="abs" style="left:643px;top:27px;width:159px;height:26px;background:#262626"></div><div class="abs" style="left:0;top:0;width:802px;height:1px;background:#2c2c2c"></div><div class="abs" style="left:101px;top:36px;width:1px;height:17px;background:#666"></div><div class="abs" style="left:163px;top:36px;width:1px;height:17px;background:#666"></div><div class="abs" style="left:251px;top:36px;width:1px;height:17px;background:#666"></div><div class="abs" style="left:413px;top:36px;width:1px;height:17px;background:#555"></div><div class="abs" style="left:490px;top:36px;width:1px;height:17px;background:#555"></div><div class="abs" style="left:566px;top:36px;width:1px;height:17px;background:#555"></div><div class="abs" style="left:718px;top:36px;width:1px;height:17px;background:#555"></div><div class="abs" style="left:794px;top:36px;width:1px;height:17px;background:#555"></div><div class="abs" style="left:642px;top:27px;width:1px;height:26px;background:#555"></div><div class="abs" style="left:336px;top:0;width:1px;height:53px;background:#2a2a2a"></div><div class="abs" style="left:35px;top:1px;width:0;height:52px;border-left:1px dotted #9a9a9a"></div><svg class="abs" style="left:22px;top:2px" width="14" height="18" viewBox="0 0 14 18"><path d="M1.5 1 v15 l10 -7.5z" fill="#777"/></svg><svg class="abs" style="left:336px;top:2px" width="14" height="18" viewBox="0 0 14 18"><path d="M12 1 v15 l-10 -7.5z" fill="#606060"/></svg><div class="abs" style="left:43px;top:0;font-size:16.5px;line-height:21px;color:#e6e6e6">35</div><div class="abs" style="left:346px;top:0;font-size:16.5px;line-height:21px;color:#949494">36</div><div class="abs" style="left:647px;top:0;font-size:16.5px;line-height:21px;color:#a0a0a0">37</div></div>
  <div id="score"><svg class="abs" style="left:0;top:0" width="1046" height="796" viewBox="257 98 1046 796"><rect x="525.3" y="99.2" width="314" height="102.2" rx="6.5" fill="#fffff2"/><path d="M257 201.6 H500" stroke="#858585" stroke-width="1.6"/><path d="M500.6 98 V894" stroke="#858585" stroke-width="1.8"/><path d="M454 134.6 H500" stroke="#000" stroke-width="1.05"/><path d="M501.5 134.6 H525.6" stroke="#55564f" stroke-width="1.05"/><path d="M525.6 134.6 H840.2" stroke="#000" stroke-width="1.05"/><path d="M454 144.35 H500" stroke="#000" stroke-width="1.05"/><path d="M501.5 144.35 H525.6" stroke="#55564f" stroke-width="1.05"/><path d="M525.6 144.35 H840.2" stroke="#000" stroke-width="1.05"/><path d="M454 154.1 H500" stroke="#000" stroke-width="1.05"/><path d="M501.5 154.1 H525.6" stroke="#55564f" stroke-width="1.05"/><path d="M525.6 154.1 H840.2" stroke="#000" stroke-width="1.05"/><path d="M454 163.65 H500" stroke="#000" stroke-width="1.05"/><path d="M501.5 163.65 H525.6" stroke="#55564f" stroke-width="1.05"/><path d="M525.6 163.65 H840.2" stroke="#000" stroke-width="1.05"/><path d="M454 173.3 H500" stroke="#000" stroke-width="1.05"/><path d="M501.5 173.3 H525.6" stroke="#55564f" stroke-width="1.05"/><path d="M525.6 173.3 H840.2" stroke="#000" stroke-width="1.05"/><path d="M454.4 134.1 V173.8" stroke="#000" stroke-width="1.15"/><path d="M525.7 134.1 V173.8" stroke="#000" stroke-width="1.15"/><path d="M839.7 134.1 V173.8" stroke="#000" stroke-width="1.15"/><rect x="463" y="143.9" width="5" height="19.5" fill="#000"/><rect x="469.3" y="143.9" width="5.1" height="19.5" fill="#000"/><text x="478.5" y="154" font-family="Liberation Serif" font-weight="bold" font-size="27.6" fill="#000">4</text><text x="478.5" y="173.3" font-family="Liberation Serif" font-weight="bold" font-size="27.6" fill="#000">4</text><path d="M536.7 129.5 L546.7 139.5 M536.7 139.5 L546.7 129.5" stroke="#000" stroke-width="1.25"/><path d="M546.45 130.1 V98" stroke="#000" stroke-width="1.3"/><path d="M564.6 129.5 L574.6 139.5 M564.6 139.5 L574.6 129.5" stroke="#000" stroke-width="1.25"/><path d="M574.35 130.1 V98" stroke="#000" stroke-width="1.3"/><path d="M603.3 129.5 L613.3 139.5 M603.3 139.5 L613.3 129.5" stroke="#000" stroke-width="1.25"/><path d="M613.05 130.1 V98" stroke="#000" stroke-width="1.3"/><path d="M630.8 129.5 L640.8 139.5 M630.8 139.5 L640.8 129.5" stroke="#000" stroke-width="1.25"/><path d="M640.55 130.1 V98" stroke="#000" stroke-width="1.3"/><path d="M666.2 129.5 L676.2 139.5 M666.2 139.5 L676.2 129.5" stroke="#000" stroke-width="1.25"/><path d="M675.95 130.1 V98" stroke="#000" stroke-width="1.3"/><path d="M704.9 129.5 L714.9 139.5 M704.9 139.5 L714.9 129.5" stroke="#000" stroke-width="1.25"/><path d="M714.65 130.1 V98" stroke="#000" stroke-width="1.3"/><path d="M754.3 129.5 L764.3 139.5 M754.3 139.5 L764.3 129.5" stroke="#000" stroke-width="1.25"/><path d="M764.05 130.1 V98" stroke="#000" stroke-width="1.3"/><path d="M781.1 129.5 L791.1 139.5 M781.1 139.5 L791.1 129.5" stroke="#000" stroke-width="1.25"/><path d="M790.85 130.1 V98" stroke="#000" stroke-width="1.3"/><circle cx="811.4" cy="134.3" r="4.8" fill="none" stroke="#000" stroke-width="1.05"/><path d="M808 130.9 l6.8 6.8 M808 137.7 l6.8 -6.8" stroke="#000" stroke-width="1.05"/><path d="M816.9 132.5 V98" stroke="#000" stroke-width="1.3"/><rect x="545.8000000000001" y="97" width="95.3999999999999" height="4" fill="#000"/><rect x="675.3000000000001" y="97" width="39.99999999999993" height="4" fill="#000"/><rect x="763.4" y="99.8" width="28.1" height="6.2" fill="#000"/><path d="M534.9 173.5 L548.6999999999999 162 V171.2 L534.9 181.2z" fill="#000"/><path d="M535.5 176 V215" stroke="#000" stroke-width="1.25"/><path d="M574.9 173.5 L588.6999999999999 162 V171.2 L574.9 181.2z" fill="#000"/><path d="M575.5 176 V215" stroke="#000" stroke-width="1.25"/><path d="M690.8 173.5 L704.5999999999999 162 V171.2 L690.8 181.2z" fill="#000"/><path d="M691.4 176 V215" stroke="#000" stroke-width="1.25"/><path d="M726.3 173.5 L740.0999999999999 162 V171.2 L726.3 181.2z" fill="#000"/><path d="M726.9 176 V215" stroke="#000" stroke-width="1.25"/><rect x="534.9" y="210" width="40.9" height="5.7" fill="#000"/><rect x="562.8" y="202.8" width="13" height="5.7" fill="#000"/><rect x="690.8" y="210" width="36.4" height="5.7" fill="#000"/><rect x="713.8" y="202.8" width="13.4" height="5.7" fill="#000"/><circle cx="552.5" cy="167.1" r="2.05" fill="#000"/><path d="M603.5 157.6 L611.7 148.9 L620.0 157.6z" fill="none" stroke="#000" stroke-width="1.5" stroke-linejoin="miter"/><path d="M643.1 157.6 L651.3000000000001 148.9 L659.6 157.6z" fill="none" stroke="#000" stroke-width="1.5" stroke-linejoin="miter"/><path d="M754.3 157.6 L762.5 148.9 L770.8 157.6z" fill="none" stroke="#000" stroke-width="1.5" stroke-linejoin="miter"/><path d="M602.6 157.6 V196 M642 157.6 V196 M753.2 157.6 V187.7" stroke="#000" stroke-width="1.25"/><rect x="602" y="190.6" width="40.6" height="5.7" fill="#000"/><rect x="628.8" y="183.4" width="13.8" height="5.6" fill="#000"/><circle cx="619.1" cy="148.2" r="2.05" fill="#000"/><circle cx="673.2" cy="166.2" r="2.2" fill="#000"/><path d="M671.6 167.6 c3.4 1.8 7.6 0.4 10.4 -3.6" fill="none" stroke="#000" stroke-width="1.3"/><circle cx="668.8" cy="175.6" r="2.2" fill="#000"/><path d="M667.2 177 c3.4 1.8 7.4 0.4 10.2 -3.4" fill="none" stroke="#000" stroke-width="1.3"/><path d="M682.2 163.6 L669.3 190.8" stroke="#000" stroke-width="1.3"/></svg></div>
  <div id="w2" class="win"><div class="title"></div><div class="tl" style="left:9.0px"></div><div class="tl" style="left:33.1px"></div><div class="tl" style="left:57.2px"></div><svg class="abs" style="left:461.4px;top:6.6px" width="15.6" height="17.4" viewBox="0 0 16 18"><path d="M1 0.8 h9.5 l4.5 4.5 v12 h-14z" fill="#f3f3f3" stroke="#cfcfcf" stroke-width="0.6"/><rect x="3.6" y="4.4" width="8.6" height="8.8" rx="1.6" fill="#2b3542"/><circle cx="7.9" cy="8.8" r="2.7" fill="#c9d4e2"/><circle cx="7.9" cy="8.8" r="1.1" fill="#5c6c80"/></svg><div class="abs" style="left:484px;top:6px;font-size:16.3px;font-weight:bold;color:#3c3c3c;line-height:20px">scoresong</div><div class="bar"></div><div class="abs" style="left:13px;top:51px;width:104.5px;height:25px;border-radius:6px;background:#5b5b5b"><span class="abs" style="left:12px;top:0;line-height:23.4px;font-size:16.3px;color:#f2f2f2">Reiniciar</span><svg class="abs" style="left:85px;top:9px" width="11" height="8" viewBox="0 0 11 8"><path d="M1.5 1.5 L5.5 5.5 L9.5 1.5" fill="none" stroke="#b9b9b9" stroke-width="1.4" stroke-linecap="round" stroke-linejoin="round"/></svg></div><div class="th"><span style="left:86px">Entrada</span><span style="left:180px">Nota de salida</span><span style="left:324px">Velocidad</span><span style="left:469px">Canal</span><span style="left:576.5px">Cable</span><span style="left:673px">Cabeza</span><span style="left:732px">Pos. rel.</span><span style="left:803px">Grupo</span><i style="left:78.4px"></i><i style="left:172.0px"></i><i style="left:316.5px"></i><i style="left:461.2px"></i><i style="left:569.0px"></i><i style="left:664.5px"></i><i style="left:724.0px"></i><i style="left:795.4px"></i><i style="left:1009.0px"></i><div class="abs" style="left:1009px;top:0;width:20px;height:26px;background:#343434"></div><div class="abs" style="left:0;top:0;width:78px;height:26px;background:#3c3c3c"></div></div><div class="row" style="top:121.90px;background:#363636"><span style="left:7px">C7</span><span style="left:98px">C7</span><b style="left:141px;top:3.6px;width:85.6px;height:11.4px;background:#262626"></b><b style="left:141px;top:3.6px;width:74.4px;height:11.4px;background:#3b6ca7"></b><span style="left:277.5px">0</span><b style="left:285.70000000000005px;top:3.6px;width:85.7px;height:11.4px;background:#262626"></b><b style="left:285.70000000000005px;top:3.6px;width:43.4px;height:11.4px;background:#3b6ca7"></b><span style="left:386.6px">Base</span><svg class="ud2" style="left:476px" viewBox="0 0 8 12"><path d="M1.5 4.5 L4 2 L6.5 4.5 M1.5 7.5 L4 10 L6.5 7.5" fill="none" stroke="#e0e0e0" stroke-width="1.45" stroke-linecap="round" stroke-linejoin="round"/></svg><span style="left:508px">1</span><svg class="abs" style="left:591px;top:4px" width="16" height="12" viewBox="0 0 16 12"><ellipse cx="8" cy="6" rx="6.6" ry="4.4" transform="rotate(-20 8 6)" fill="#cfcfcf"/></svg><svg class="ud2" style="left:630px" viewBox="0 0 8 12"><path d="M1.5 4.5 L4 2 L6.5 4.5 M1.5 7.5 L4 10 L6.5 7.5" fill="none" stroke="#e0e0e0" stroke-width="1.45" stroke-linecap="round" stroke-linejoin="round"/></svg><span style="left:726px;letter-spacing:1.7px">---</span><svg class="ud2" style="left:921px" viewBox="0 0 8 12"><path d="M1.5 4.5 L4 2 L6.5 4.5 M1.5 7.5 L4 10 L6.5 7.5" fill="none" stroke="#e0e0e0" stroke-width="1.45" stroke-linecap="round" stroke-linejoin="round"/></svg><b style="left:93.0px;top:0;width:1px;height:20px;background:#3a3a3a"></b><b style="left:237.5px;top:0;width:1px;height:20px;background:#3a3a3a"></b><b style="left:382.2px;top:0;width:1px;height:20px;background:#3a3a3a"></b><b style="left:490.0px;top:0;width:1px;height:20px;background:#3a3a3a"></b><b style="left:585.5px;top:0;width:1px;height:20px;background:#3a3a3a"></b><b style="left:645.0px;top:0;width:1px;height:20px;background:#3a3a3a"></b><b style="left:716.4px;top:0;width:1px;height:20px;background:#3a3a3a"></b></div><div class="row" style="top:141.35px;background:#343434"><span style="left:7px">B6</span><span style="left:98px">B6</span><b style="left:141px;top:3.6px;width:85.6px;height:11.4px;background:#262626"></b><b style="left:141px;top:3.6px;width:72.7px;height:11.4px;background:#3b6ca7"></b><span style="left:277.5px">0</span><b style="left:285.70000000000005px;top:3.6px;width:85.7px;height:11.4px;background:#262626"></b><b style="left:285.70000000000005px;top:3.6px;width:43.4px;height:11.4px;background:#3b6ca7"></b><span style="left:386.6px">Base</span><svg class="ud2" style="left:476px" viewBox="0 0 8 12"><path d="M1.5 4.5 L4 2 L6.5 4.5 M1.5 7.5 L4 10 L6.5 7.5" fill="none" stroke="#e0e0e0" stroke-width="1.45" stroke-linecap="round" stroke-linejoin="round"/></svg><span style="left:508px">1</span><svg class="abs" style="left:591px;top:4px" width="16" height="12" viewBox="0 0 16 12"><ellipse cx="8" cy="6" rx="6.6" ry="4.4" transform="rotate(-20 8 6)" fill="#cfcfcf"/></svg><svg class="ud2" style="left:630px" viewBox="0 0 8 12"><path d="M1.5 4.5 L4 2 L6.5 4.5 M1.5 7.5 L4 10 L6.5 7.5" fill="none" stroke="#e0e0e0" stroke-width="1.45" stroke-linecap="round" stroke-linejoin="round"/></svg><span style="left:726px;letter-spacing:1.7px">---</span><svg class="ud2" style="left:921px" viewBox="0 0 8 12"><path d="M1.5 4.5 L4 2 L6.5 4.5 M1.5 7.5 L4 10 L6.5 7.5" fill="none" stroke="#e0e0e0" stroke-width="1.45" stroke-linecap="round" stroke-linejoin="round"/></svg><b style="left:93.0px;top:0;width:1px;height:20px;background:#3a3a3a"></b><b style="left:237.5px;top:0;width:1px;height:20px;background:#3a3a3a"></b><b style="left:382.2px;top:0;width:1px;height:20px;background:#3a3a3a"></b><b style="left:490.0px;top:0;width:1px;height:20px;background:#3a3a3a"></b><b style="left:585.5px;top:0;width:1px;height:20px;background:#3a3a3a"></b><b style="left:645.0px;top:0;width:1px;height:20px;background:#3a3a3a"></b><b style="left:716.4px;top:0;width:1px;height:20px;background:#3a3a3a"></b></div><div class="row" style="top:160.80px;background:#363636"><span style="left:7px">A#6</span><span style="left:98px">A#6</span><b style="left:141px;top:3.6px;width:85.6px;height:11.4px;background:#262626"></b><b style="left:141px;top:3.6px;width:72.7px;height:11.4px;background:#3b6ca7"></b><span style="left:277.5px">0</span><b style="left:285.70000000000005px;top:3.6px;width:85.7px;height:11.4px;background:#262626"></b><b style="left:285.70000000000005px;top:3.6px;width:43.4px;height:11.4px;background:#3b6ca7"></b><span style="left:386.6px">Base</span><svg class="ud2" style="left:476px" viewBox="0 0 8 12"><path d="M1.5 4.5 L4 2 L6.5 4.5 M1.5 7.5 L4 10 L6.5 7.5" fill="none" stroke="#e0e0e0" stroke-width="1.45" stroke-linecap="round" stroke-linejoin="round"/></svg><span style="left:508px">1</span><svg class="abs" style="left:591px;top:4px" width="16" height="12" viewBox="0 0 16 12"><ellipse cx="8" cy="6" rx="6.6" ry="4.4" transform="rotate(-20 8 6)" fill="#cfcfcf"/></svg><svg class="ud2" style="left:630px" viewBox="0 0 8 12"><path d="M1.5 4.5 L4 2 L6.5 4.5 M1.5 7.5 L4 10 L6.5 7.5" fill="none" stroke="#e0e0e0" stroke-width="1.45" stroke-linecap="round" stroke-linejoin="round"/></svg><span style="left:726px;letter-spacing:1.7px">---</span><svg class="ud2" style="left:921px" viewBox="0 0 8 12"><path d="M1.5 4.5 L4 2 L6.5 4.5 M1.5 7.5 L4 10 L6.5 7.5" fill="none" stroke="#e0e0e0" stroke-width="1.45" stroke-linecap="round" stroke-linejoin="round"/></svg><b style="left:93.0px;top:0;width:1px;height:20px;background:#3a3a3a"></b><b style="left:237.5px;top:0;width:1px;height:20px;background:#3a3a3a"></b><b style="left:382.2px;top:0;width:1px;height:20px;background:#3a3a3a"></b><b style="left:490.0px;top:0;width:1px;height:20px;background:#3a3a3a"></b><b style="left:585.5px;top:0;width:1px;height:20px;background:#3a3a3a"></b><b style="left:645.0px;top:0;width:1px;height:20px;background:#3a3a3a"></b><b style="left:716.4px;top:0;width:1px;height:20px;background:#3a3a3a"></b></div><div class="row" style="top:180.25px;background:#343434"><span style="left:7px">A6</span><span style="left:98px">A6</span><b style="left:141px;top:3.6px;width:85.6px;height:11.4px;background:#262626"></b><b style="left:141px;top:3.6px;width:71.5px;height:11.4px;background:#3b6ca7"></b><span style="left:277.5px">0</span><b style="left:285.70000000000005px;top:3.6px;width:85.7px;height:11.4px;background:#262626"></b><b style="left:285.70000000000005px;top:3.6px;width:43.4px;height:11.4px;background:#3b6ca7"></b><span style="left:386.6px">Base</span><svg class="ud2" style="left:476px" viewBox="0 0 8 12"><path d="M1.5 4.5 L4 2 L6.5 4.5 M1.5 7.5 L4 10 L6.5 7.5" fill="none" stroke="#e0e0e0" stroke-width="1.45" stroke-linecap="round" stroke-linejoin="round"/></svg><span style="left:508px">1</span><svg class="abs" style="left:591px;top:4px" width="16" height="12" viewBox="0 0 16 12"><ellipse cx="8" cy="6" rx="6.6" ry="4.4" transform="rotate(-20 8 6)" fill="#cfcfcf"/></svg><svg class="ud2" style="left:630px" viewBox="0 0 8 12"><path d="M1.5 4.5 L4 2 L6.5 4.5 M1.5 7.5 L4 10 L6.5 7.5" fill="none" stroke="#e0e0e0" stroke-width="1.45" stroke-linecap="round" stroke-linejoin="round"/></svg><span style="left:726px;letter-spacing:1.7px">---</span><svg class="ud2" style="left:921px" viewBox="0 0 8 12"><path d="M1.5 4.5 L4 2 L6.5 4.5 M1.5 7.5 L4 10 L6.5 7.5" fill="none" stroke="#e0e0e0" stroke-width="1.45" stroke-linecap="round" stroke-linejoin="round"/></svg><b style="left:93.0px;top:0;width:1px;height:20px;background:#3a3a3a"></b><b style="left:237.5px;top:0;width:1px;height:20px;background:#3a3a3a"></b><b style="left:382.2px;top:0;width:1px;height:20px;background:#3a3a3a"></b><b style="left:490.0px;top:0;width:1px;height:20px;background:#3a3a3a"></b><b style="left:585.5px;top:0;width:1px;height:20px;background:#3a3a3a"></b><b style="left:645.0px;top:0;width:1px;height:20px;background:#3a3a3a"></b><b style="left:716.4px;top:0;width:1px;height:20px;background:#3a3a3a"></b></div><div class="row" style="top:199.70px;background:#363636"><span style="left:7px">G#6</span><span style="left:98px">G#6</span><b style="left:141px;top:3.6px;width:85.6px;height:11.4px;background:#262626"></b><b style="left:141px;top:3.6px;width:70.3px;height:11.4px;background:#3b6ca7"></b><span style="left:277.5px">0</span><b style="left:285.70000000000005px;top:3.6px;width:85.7px;height:11.4px;background:#262626"></b><b style="left:285.70000000000005px;top:3.6px;width:43.4px;height:11.4px;background:#3b6ca7"></b><span style="left:386.6px">Base</span><svg class="ud2" style="left:476px" viewBox="0 0 8 12"><path d="M1.5 4.5 L4 2 L6.5 4.5 M1.5 7.5 L4 10 L6.5 7.5" fill="none" stroke="#e0e0e0" stroke-width="1.45" stroke-linecap="round" stroke-linejoin="round"/></svg><span style="left:508px">1</span><svg class="abs" style="left:591px;top:4px" width="16" height="12" viewBox="0 0 16 12"><ellipse cx="8" cy="6" rx="6.6" ry="4.4" transform="rotate(-20 8 6)" fill="#cfcfcf"/></svg><svg class="ud2" style="left:630px" viewBox="0 0 8 12"><path d="M1.5 4.5 L4 2 L6.5 4.5 M1.5 7.5 L4 10 L6.5 7.5" fill="none" stroke="#e0e0e0" stroke-width="1.45" stroke-linecap="round" stroke-linejoin="round"/></svg><span style="left:726px;letter-spacing:1.7px">---</span><svg class="ud2" style="left:921px" viewBox="0 0 8 12"><path d="M1.5 4.5 L4 2 L6.5 4.5 M1.5 7.5 L4 10 L6.5 7.5" fill="none" stroke="#e0e0e0" stroke-width="1.45" stroke-linecap="round" stroke-linejoin="round"/></svg><b style="left:93.0px;top:0;width:1px;height:20px;background:#3a3a3a"></b><b style="left:237.5px;top:0;width:1px;height:20px;background:#3a3a3a"></b><b style="left:382.2px;top:0;width:1px;height:20px;background:#3a3a3a"></b><b style="left:490.0px;top:0;width:1px;height:20px;background:#3a3a3a"></b><b style="left:585.5px;top:0;width:1px;height:20px;background:#3a3a3a"></b><b style="left:645.0px;top:0;width:1px;height:20px;background:#3a3a3a"></b><b style="left:716.4px;top:0;width:1px;height:20px;background:#3a3a3a"></b></div><div class="row" style="top:219.15px;background:#343434"><span style="left:7px">G6</span><span style="left:98px">G6</span><b style="left:141px;top:3.6px;width:85.6px;height:11.4px;background:#262626"></b><b style="left:141px;top:3.6px;width:70.3px;height:11.4px;background:#3b6ca7"></b><span style="left:277.5px">0</span><b style="left:285.70000000000005px;top:3.6px;width:85.7px;height:11.4px;background:#262626"></b><b style="left:285.70000000000005px;top:3.6px;width:43.4px;height:11.4px;background:#3b6ca7"></b><span style="left:386.6px">Base</span><svg class="ud2" style="left:476px" viewBox="0 0 8 12"><path d="M1.5 4.5 L4 2 L6.5 4.5 M1.5 7.5 L4 10 L6.5 7.5" fill="none" stroke="#e0e0e0" stroke-width="1.45" stroke-linecap="round" stroke-linejoin="round"/></svg><span style="left:508px">1</span><svg class="abs" style="left:591px;top:4px" width="16" height="12" viewBox="0 0 16 12"><ellipse cx="8" cy="6" rx="6.6" ry="4.4" transform="rotate(-20 8 6)" fill="#cfcfcf"/></svg><svg class="ud2" style="left:630px" viewBox="0 0 8 12"><path d="M1.5 4.5 L4 2 L6.5 4.5 M1.5 7.5 L4 10 L6.5 7.5" fill="none" stroke="#e0e0e0" stroke-width="1.45" stroke-linecap="round" stroke-linejoin="round"/></svg><span style="left:726px;letter-spacing:1.7px">---</span><svg class="ud2" style="left:921px" viewBox="0 0 8 12"><path d="M1.5 4.5 L4 2 L6.5 4.5 M1.5 7.5 L4 10 L6.5 7.5" fill="none" stroke="#e0e0e0" stroke-width="1.45" stroke-linecap="round" stroke-linejoin="round"/></svg><b style="left:93.0px;top:0;width:1px;height:20px;background:#3a3a3a"></b><b style="left:237.5px;top:0;width:1px;height:20px;background:#3a3a3a"></b><b style="left:382.2px;top:0;width:1px;height:20px;background:#3a3a3a"></b><b style="left:490.0px;top:0;width:1px;height:20px;background:#3a3a3a"></b><b style="left:585.5px;top:0;width:1px;height:20px;background:#3a3a3a"></b><b style="left:645.0px;top:0;width:1px;height:20px;background:#3a3a3a"></b><b style="left:716.4px;top:0;width:1px;height:20px;background:#3a3a3a"></b></div><div class="row" style="top:238.60px;background:#363636"><span style="left:7px">F#6</span><span style="left:98px">F#6</span><b style="left:141px;top:3.6px;width:85.6px;height:11.4px;background:#262626"></b><b style="left:141px;top:3.6px;width:69.5px;height:11.4px;background:#3b6ca7"></b><span style="left:277.5px">0</span><b style="left:285.70000000000005px;top:3.6px;width:85.7px;height:11.4px;background:#262626"></b><b style="left:285.70000000000005px;top:3.6px;width:43.4px;height:11.4px;background:#3b6ca7"></b><span style="left:386.6px">Base</span><svg class="ud2" style="left:476px" viewBox="0 0 8 12"><path d="M1.5 4.5 L4 2 L6.5 4.5 M1.5 7.5 L4 10 L6.5 7.5" fill="none" stroke="#e0e0e0" stroke-width="1.45" stroke-linecap="round" stroke-linejoin="round"/></svg><span style="left:508px">1</span><svg class="abs" style="left:591px;top:4px" width="16" height="12" viewBox="0 0 16 12"><ellipse cx="8" cy="6" rx="6.6" ry="4.4" transform="rotate(-20 8 6)" fill="#cfcfcf"/></svg><svg class="ud2" style="left:630px" viewBox="0 0 8 12"><path d="M1.5 4.5 L4 2 L6.5 4.5 M1.5 7.5 L4 10 L6.5 7.5" fill="none" stroke="#e0e0e0" stroke-width="1.45" stroke-linecap="round" stroke-linejoin="round"/></svg><span style="left:726px;letter-spacing:1.7px">---</span><svg class="ud2" style="left:921px" viewBox="0 0 8 12"><path d="M1.5 4.5 L4 2 L6.5 4.5 M1.5 7.5 L4 10 L6.5 7.5" fill="none" stroke="#e0e0e0" stroke-width="1.45" stroke-linecap="round" stroke-linejoin="round"/></svg><b style="left:93.0px;top:0;width:1px;height:20px;background:#3a3a3a"></b><b style="left:237.5px;top:0;width:1px;height:20px;background:#3a3a3a"></b><b style="left:382.2px;top:0;width:1px;height:20px;background:#3a3a3a"></b><b style="left:490.0px;top:0;width:1px;height:20px;background:#3a3a3a"></b><b style="left:585.5px;top:0;width:1px;height:20px;background:#3a3a3a"></b><b style="left:645.0px;top:0;width:1px;height:20px;background:#3a3a3a"></b><b style="left:716.4px;top:0;width:1px;height:20px;background:#3a3a3a"></b></div><div class="abs" style="left:2px;top:119px;width:77px;height:133px;background:#2c2c2c;overflow:hidden"><div class="abs" style="left:0;top:18.9px;width:72px;height:2.6px;background:#b4b4b4"></div><div class="abs" style="left:0;top:53.5px;width:72px;height:3.0px;background:#b4b4b4"></div><div class="abs" style="left:0;top:87.3px;width:72px;height:3.0px;background:#b4b4b4"></div><div class="abs" style="left:0;top:120.7px;width:72px;height:3.0px;background:#b4b4b4"></div><div class="abs" style="left:0;top:-358.0px;width:76px;height:377.4px;background:linear-gradient(90deg,#e9e9e9 70%,#dadada);border-radius:0 3.5px 3.5px 0"></div><div class="abs" style="left:0;top:21.0px;width:76px;height:33.0px;background:linear-gradient(90deg,#e9e9e9 70%,#dadada);border-radius:0 3.5px 3.5px 0"></div><div class="abs" style="left:0;top:56.0px;width:76px;height:31.8px;background:linear-gradient(90deg,#e9e9e9 70%,#dadada);border-radius:0 3.5px 3.5px 0"></div><div class="abs" style="left:0;top:89.8px;width:76px;height:31.4px;background:linear-gradient(90deg,#e9e9e9 70%,#dadada);border-radius:0 3.5px 3.5px 0"></div><div class="abs" style="left:0;top:123.2px;width:76px;height:28.8px;background:linear-gradient(90deg,#e9e9e9 70%,#dadada);border-radius:0 3.5px 3.5px 0"></div><div class="abs" style="left:0;top:-13.0px;width:48px;height:13.6px;background:#222;border-radius:0 3px 3px 0;box-shadow:0 0 0 1px #8a8a8a"></div><div class="abs" style="left:0;top:39.4px;width:48px;height:20.1px;background:#222;border-radius:0 3px 3px 0;box-shadow:0 0 0 1px #8a8a8a"></div><div class="abs" style="left:0;top:78.8px;width:48px;height:19.7px;background:#222;border-radius:0 3px 3px 0;box-shadow:0 0 0 1px #8a8a8a"></div><div class="abs" style="left:0;top:117.8px;width:48px;height:24.2px;background:#222;border-radius:0 3px 3px 0;box-shadow:0 0 0 1px #8a8a8a"></div></div><div class="abs" style="left:1009px;top:119px;width:20px;height:133px;background:#2d2d2d"></div><div class="abs" style="left:1013.8px;top:137.3px;width:8.8px;height:22px;border-radius:4.4px;background:#a0a0a0"></div><div class="abs" style="left:0;top:252px;width:100%;height:19px;background:#373737;border-top:1px solid #262626"></div><div class="abs" style="left:172px;top:252px;width:1px;height:19px;background:#262626"></div><div class="abs" style="left:1009px;top:252px;width:20px;height:19px;background:#303030"></div></div>
  <div id="w3" class="win"><div class="title"></div><div class="tl" style="left:10.8px;background:#fe5f57;box-shadow:inset 0 0 0 0.5px rgba(0,0,0,.15)"></div><div class="tl" style="left:34.9px;background:#febc2e;box-shadow:inset 0 0 0 0.5px rgba(0,0,0,.15)"></div><div class="tl" style="left:59.0px;background:#28c840;box-shadow:inset 0 0 0 0.5px rgba(0,0,0,.15)"></div><svg class="abs" style="left:465.3px;top:7.2px" width="15.6" height="17.4" viewBox="0 0 16 18"><path d="M1 0.8 h9.5 l4.5 4.5 v12 h-14z" fill="#f1f1f1" stroke="#d6d6d6" stroke-width="0.8"/><rect x="3.6" y="4.4" width="8.6" height="8.8" rx="1.6" fill="#2b3542"/><circle cx="7.9" cy="8.8" r="2.7" fill="#c9d4e2"/><circle cx="7.9" cy="8.8" r="1.1" fill="#5c6c80"/></svg><div class="abs" style="left:488px;top:6.5px;font-size:16.3px;font-weight:bold;color:#3a3a3a;line-height:20px">scoresong</div><div class="bar"></div><div class="abs" style="left:24.5px;top:58px;width:39px;height:24px;border-radius:6px;background:linear-gradient(#2f8bff,#0b6af0);box-shadow:0 1px 1.5px rgba(0,0,0,.25)"><svg class="abs" style="left:5.6px;top:-0.4px" width="27.5" height="25" viewBox="0 0 22 20"><g fill="none" stroke="#fff" stroke-width="1.15" stroke-linecap="round"><path d="M9.2 12.8 a3.3 3.3 0 0 1 0 -4.6 l3.4 -3.4 a3.3 3.3 0 0 1 4.6 4.6 l-1.6 1.6"/><path d="M12.8 7.2 a3.3 3.3 0 0 1 0 4.6 l-3.4 3.4 a3.3 3.3 0 0 1 -4.6 -4.6 l1.6 -1.6"/></g></svg></div><div class="pop" style="left:73.6px;top:58px;width:85.2px"><span style="left:10px;top:-0.8px">Nuevo</span><div class="bsq" style="left:63.9px"><svg style="left:4.6px;top:6px" width="10" height="8" viewBox="0 0 10 8"><path d="M1.8 2 L5 5.4 L8.2 2" fill="none" stroke="#fff" stroke-width="1.8" stroke-linecap="round" stroke-linejoin="round"/></svg></div></div><div class="pop" style="left:168.9px;top:58px;width:91.7px"><span style="left:10px;top:-0.8px">Edición</span><div class="bsq" style="left:70.4px"><svg style="left:4.6px;top:6px" width="10" height="8" viewBox="0 0 10 8"><path d="M1.8 2 L5 5.4 L8.2 2" fill="none" stroke="#fff" stroke-width="1.8" stroke-linecap="round" stroke-linejoin="round"/></svg></div></div><div class="pop" style="left:435.5px;top:58px;width:164.8px"><span style="left:10.8px;top:-0.8px">Batería</span><div class="bsq" style="left:143.1px"><svg style="left:4.6px;top:2.6px" width="10" height="14" viewBox="0 0 10 14"><path d="M2 5.2 L5 2.2 L8 5.2 M2 8.8 L5 11.8 L8 8.8" fill="none" stroke="#fff" stroke-width="1.7" stroke-linecap="round" stroke-linejoin="round"/></svg></div></div><div class="abs" style="left:875.3px;top:57px;width:135.7px;height:26.5px;border-radius:7px;background:#dedede;box-shadow:inset 0 0 0 0.5px rgba(0,0,0,.08)"></div><div class="abs" style="left:966.8px;top:58px;width:43.4px;height:24.5px;border-radius:6px;background:#fff;box-shadow:0 0 0 0.5px rgba(0,0,0,.12),0 1px 2px rgba(0,0,0,.25)"></div><div class="abs" style="left:921.2px;top:63px;width:1px;height:14px;background:#c4c4c4"></div><svg class="abs" style="left:887.8px;top:62.3px" width="20" height="16" viewBox="0 0 20 16"><rect x="1.6" y="1.6" width="16.8" height="12.8" rx="2.2" fill="none" stroke="#222" stroke-width="1.5"/><rect x="3.6" y="3.6" width="12.8" height="3.6" fill="#222"/><rect x="3.6" y="8.8" width="12.8" height="3.6" fill="#222"/></svg><svg class="abs" style="left:933.5px;top:62.3px" width="20" height="16" viewBox="0 0 20 16"><rect x="1.6" y="1.6" width="16.8" height="12.8" rx="2.2" fill="none" stroke="#222" stroke-width="1.5"/><rect x="3.6" y="3.6" width="12.8" height="3.6" fill="#222"/></svg><svg class="abs" style="left:978.9px;top:62.3px" width="20" height="16" viewBox="0 0 20 16"><rect x="1.6" y="1.6" width="16.8" height="12.8" rx="2.2" fill="none" stroke="#222" stroke-width="1.5"/><rect x="3.6" y="8.4" width="12.8" height="4" fill="#222"/></svg><div class="sec"></div><div class="pop" style="left:33.0px;top:111.8px;width:34.2px;height:23.7px"><svg style="left:10.1px;top:5px" width="14" height="14" viewBox="0 0 14 14"><path d="M7 1.2 V12.8 M1.2 7 H12.8" stroke="#333" stroke-width="1.5" stroke-linecap="round"/></svg></div><div class="pop" style="left:677.0px;top:111.8px;width:34.2px;height:23.7px"><svg style="left:10.1px;top:5px" width="14" height="14" viewBox="0 0 14 14"><path d="M7 1.2 V12.8 M1.2 7 H12.8" stroke="#333" stroke-width="1.5" stroke-linecap="round"/></svg></div><div class="abs" style="left:355.5px;top:112px;font-size:16.3px;line-height:24px;color:#222">Voz</div><div class="abs" style="left:900.2px;top:112px;font-size:16.3px;line-height:24px;color:#222">Asignar</div><div class="ch"><span style="left:30.2px">Silencio</span><span style="left:132.0px">Plica</span><span style="left:220.4px">Pos. plica</span><span style="left:318.0px">Ligadura</span><span style="left:411.4px">N-sillo</span><span style="left:506.3px">Barrado</span><span style="left:592.7px">Color</span><span style="left:674.0px">Posición</span><span style="left:771.3px">Grupo percusión</span><i style="left:125.9px"></i><i style="left:214.3px"></i><i style="left:312.4px"></i><i style="left:405.7px"></i><i style="left:500.6px"></i><i style="left:586.2px"></i><i style="left:764.9px"></i></div><div class="abs" style="left:24px;top:106px;width:1px;height:247.5px;background:#9a9a9a"></div><div class="abs" style="left:666.7px;top:106px;width:1.3px;height:247.5px;background:#8c8c8c"></div><div class="pop" style="left:31.8px;top:221.0px;width:86.0px"><span style="left:9.6px">Mostrar</span><svg style="left:69.19999999999999px;top:5px" width="10" height="14" viewBox="0 0 10 14"><path d="M1.8 5.2 L5 2 L8.2 5.2 M1.8 8.8 L5 12 L8.2 8.8" fill="none" stroke="#262626" stroke-width="1.9" stroke-linecap="round" stroke-linejoin="round"/></svg></div><div class="pop" style="left:132.3px;top:221.0px;width:74.0px"><span style="left:9.7px;transform:scaleX(0.93);transform-origin:0 0">Arriba</span><svg style="left:56.69999999999999px;top:5px" width="10" height="14" viewBox="0 0 10 14"><path d="M1.8 5.2 L5 2 L8.2 5.2 M1.8 8.8 L5 12 L8.2 8.8" fill="none" stroke="#262626" stroke-width="1.9" stroke-linecap="round" stroke-linejoin="round"/></svg></div><div class="pop" style="left:220.8px;top:221.0px;width:84.4px"><span style="left:10.0px">Normal</span><svg style="left:66.69999999999999px;top:5px" width="10" height="14" viewBox="0 0 10 14"><path d="M1.8 5.2 L5 2 L8.2 5.2 M1.8 8.8 L5 12 L8.2 8.8" fill="none" stroke="#262626" stroke-width="1.9" stroke-linecap="round" stroke-linejoin="round"/></svg></div><div class="pop" style="left:318.9px;top:221.0px;width:78.8px"><span style="left:8.8px">Autom.</span><svg style="left:61.89999999999998px;top:5px" width="10" height="14" viewBox="0 0 10 14"><path d="M1.8 5.2 L5 2 L8.2 5.2 M1.8 8.8 L5 12 L8.2 8.8" fill="none" stroke="#262626" stroke-width="1.9" stroke-linecap="round" stroke-linejoin="round"/></svg></div><div class="pop" style="left:412.6px;top:221.0px;width:80.0px"><span style="left:7.4px">Autom.</span><svg style="left:63.10000000000002px;top:5px" width="10" height="14" viewBox="0 0 10 14"><path d="M1.8 5.2 L5 2 L8.2 5.2 M1.8 8.8 L5 12 L8.2 8.8" fill="none" stroke="#262626" stroke-width="1.9" stroke-linecap="round" stroke-linejoin="round"/></svg></div><div class="pop" style="left:507.0px;top:221.0px;width:72.0px"><span style="left:10.0px">Hor...</span><svg style="left:55.200000000000045px;top:5px" width="10" height="14" viewBox="0 0 10 14"><path d="M1.8 5.2 L5 2 L8.2 5.2 M1.8 8.8 L5 12 L8.2 8.8" fill="none" stroke="#262626" stroke-width="1.9" stroke-linecap="round" stroke-linejoin="round"/></svg></div><div class="pop" style="left:589.4px;top:221.0px;width:73.1px"><span style="left:9.6px">No</span><svg style="left:55.5px;top:5px" width="10" height="14" viewBox="0 0 10 14"><path d="M1.8 5.2 L5 2 L8.2 5.2 M1.8 8.8 L5 12 L8.2 8.8" fill="none" stroke="#262626" stroke-width="1.9" stroke-linecap="round" stroke-linejoin="round"/></svg></div><div class="pop" style="left:31.8px;top:303.6px;width:86.0px"><span style="left:9.6px">Mostrar</span><svg style="left:69.19999999999999px;top:5px" width="10" height="14" viewBox="0 0 10 14"><path d="M1.8 5.2 L5 2 L8.2 5.2 M1.8 8.8 L5 12 L8.2 8.8" fill="none" stroke="#262626" stroke-width="1.9" stroke-linecap="round" stroke-linejoin="round"/></svg></div><div class="pop" style="left:132.3px;top:303.6px;width:74.0px"><span style="left:9.7px;transform:scaleX(0.92);transform-origin:0 0">Abajo</span><svg style="left:56.69999999999999px;top:5px" width="10" height="14" viewBox="0 0 10 14"><path d="M1.8 5.2 L5 2 L8.2 5.2 M1.8 8.8 L5 12 L8.2 8.8" fill="none" stroke="#262626" stroke-width="1.9" stroke-linecap="round" stroke-linejoin="round"/></svg></div><div class="pop" style="left:220.8px;top:303.6px;width:84.4px"><span style="left:10.0px">Normal</span><svg style="left:66.69999999999999px;top:5px" width="10" height="14" viewBox="0 0 10 14"><path d="M1.8 5.2 L5 2 L8.2 5.2 M1.8 8.8 L5 12 L8.2 8.8" fill="none" stroke="#262626" stroke-width="1.9" stroke-linecap="round" stroke-linejoin="round"/></svg></div><div class="pop" style="left:318.9px;top:303.6px;width:78.8px"><span style="left:8.8px">Autom.</span><svg style="left:61.89999999999998px;top:5px" width="10" height="14" viewBox="0 0 10 14"><path d="M1.8 5.2 L5 2 L8.2 5.2 M1.8 8.8 L5 12 L8.2 8.8" fill="none" stroke="#262626" stroke-width="1.9" stroke-linecap="round" stroke-linejoin="round"/></svg></div><div class="pop" style="left:412.6px;top:303.6px;width:80.0px"><span style="left:7.4px">Autom.</span><svg style="left:63.10000000000002px;top:5px" width="10" height="14" viewBox="0 0 10 14"><path d="M1.8 5.2 L5 2 L8.2 5.2 M1.8 8.8 L5 12 L8.2 8.8" fill="none" stroke="#262626" stroke-width="1.9" stroke-linecap="round" stroke-linejoin="round"/></svg></div><div class="pop" style="left:507.0px;top:303.6px;width:72.0px"><span style="left:10.0px">Hor...</span><svg style="left:55.200000000000045px;top:5px" width="10" height="14" viewBox="0 0 10 14"><path d="M1.8 5.2 L5 2 L8.2 5.2 M1.8 8.8 L5 12 L8.2 8.8" fill="none" stroke="#262626" stroke-width="1.9" stroke-linecap="round" stroke-linejoin="round"/></svg></div><div class="pop" style="left:589.4px;top:303.6px;width:73.1px"><span style="left:9.6px">No</span><svg style="left:55.5px;top:5px" width="10" height="14" viewBox="0 0 10 14"><path d="M1.8 5.2 L5 2 L8.2 5.2 M1.8 8.8 L5 12 L8.2 8.8" fill="none" stroke="#262626" stroke-width="1.9" stroke-linecap="round" stroke-linejoin="round"/></svg></div><div class="pop" style="left:673.3px;top:187.1px;width:85.2px"><div style="position:absolute;left:22px;top:0;width:41px;text-align:center">0</div><svg style="left:6.5px;top:8px" width="12" height="8" viewBox="0 0 12 8"><path d="M1.5 1.5 L6 6 L10.5 1.5" fill="none" stroke="#8c8c8c" stroke-width="1.3" stroke-linecap="round" stroke-linejoin="round"/></svg><svg style="left:66.5px;top:8px" width="12" height="8" viewBox="0 0 12 8"><path d="M1.5 6 L6 1.5 L10.5 6" fill="none" stroke="#8c8c8c" stroke-width="1.3" stroke-linecap="round" stroke-linejoin="round"/></svg></div><div class="pop" style="left:797.0px;top:187.1px;width:172.2px"><span style="left:10.0px">Charles</span><svg style="left:155.4000000000001px;top:5px" width="10" height="14" viewBox="0 0 10 14"><path d="M1.8 5.2 L5 2 L8.2 5.2 M1.8 8.8 L5 12 L8.2 8.8" fill="none" stroke="#262626" stroke-width="1.9" stroke-linecap="round" stroke-linejoin="round"/></svg></div><div class="pop" style="left:673.3px;top:219.9px;width:85.2px"><div style="position:absolute;left:22px;top:0;width:41px;text-align:center">2</div><svg style="left:6.5px;top:8px" width="12" height="8" viewBox="0 0 12 8"><path d="M1.5 1.5 L6 6 L10.5 1.5" fill="none" stroke="#8c8c8c" stroke-width="1.3" stroke-linecap="round" stroke-linejoin="round"/></svg><svg style="left:66.5px;top:8px" width="12" height="8" viewBox="0 0 12 8"><path d="M1.5 6 L6 1.5 L10.5 6" fill="none" stroke="#8c8c8c" stroke-width="1.3" stroke-linecap="round" stroke-linejoin="round"/></svg></div><div class="pop" style="left:797.0px;top:219.9px;width:172.2px"><span style="left:10.0px">Platos</span><svg style="left:155.4000000000001px;top:5px" width="10" height="14" viewBox="0 0 10 14"><path d="M1.8 5.2 L5 2 L8.2 5.2 M1.8 8.8 L5 12 L8.2 8.8" fill="none" stroke="#262626" stroke-width="1.9" stroke-linecap="round" stroke-linejoin="round"/></svg></div><div class="pop" style="left:673.3px;top:252.6px;width:85.2px"><div style="position:absolute;left:22px;top:0;width:41px;text-align:center">-1</div><svg style="left:6.5px;top:8px" width="12" height="8" viewBox="0 0 12 8"><path d="M1.5 1.5 L6 6 L10.5 1.5" fill="none" stroke="#8c8c8c" stroke-width="1.3" stroke-linecap="round" stroke-linejoin="round"/></svg><svg style="left:66.5px;top:8px" width="12" height="8" viewBox="0 0 12 8"><path d="M1.5 6 L6 1.5 L10.5 6" fill="none" stroke="#8c8c8c" stroke-width="1.3" stroke-linecap="round" stroke-linejoin="round"/></svg></div><div class="pop" style="left:797.0px;top:252.6px;width:172.2px"><span style="left:10.0px">Toms</span><svg style="left:155.4000000000001px;top:5px" width="10" height="14" viewBox="0 0 10 14"><path d="M1.8 5.2 L5 2 L8.2 5.2 M1.8 8.8 L5 12 L8.2 8.8" fill="none" stroke="#262626" stroke-width="1.9" stroke-linecap="round" stroke-linejoin="round"/></svg></div><div class="pop" style="left:673.3px;top:285.4px;width:85.2px"><div style="position:absolute;left:22px;top:0;width:41px;text-align:center">-4</div><svg style="left:6.5px;top:8px" width="12" height="8" viewBox="0 0 12 8"><path d="M1.5 1.5 L6 6 L10.5 1.5" fill="none" stroke="#8c8c8c" stroke-width="1.3" stroke-linecap="round" stroke-linejoin="round"/></svg><svg style="left:66.5px;top:8px" width="12" height="8" viewBox="0 0 12 8"><path d="M1.5 6 L6 1.5 L10.5 6" fill="none" stroke="#8c8c8c" stroke-width="1.3" stroke-linecap="round" stroke-linejoin="round"/></svg></div><div class="pop" style="left:797.0px;top:285.4px;width:172.2px"><span style="left:10.0px">Caja</span><svg style="left:155.4000000000001px;top:5px" width="10" height="14" viewBox="0 0 10 14"><path d="M1.8 5.2 L5 2 L8.2 5.2 M1.8 8.8 L5 12 L8.2 8.8" fill="none" stroke="#262626" stroke-width="1.9" stroke-linecap="round" stroke-linejoin="round"/></svg></div><div class="pop" style="left:673.3px;top:318.1px;width:85.2px"><div style="position:absolute;left:22px;top:0;width:41px;text-align:center">-8</div><svg style="left:6.5px;top:8px" width="12" height="8" viewBox="0 0 12 8"><path d="M1.5 1.5 L6 6 L10.5 1.5" fill="none" stroke="#8c8c8c" stroke-width="1.3" stroke-linecap="round" stroke-linejoin="round"/></svg><svg style="left:66.5px;top:8px" width="12" height="8" viewBox="0 0 12 8"><path d="M1.5 6 L6 1.5 L10.5 6" fill="none" stroke="#8c8c8c" stroke-width="1.3" stroke-linecap="round" stroke-linejoin="round"/></svg></div><div class="pop" style="left:797.0px;top:318.1px;width:172.2px"><span style="left:10.0px">Bombo</span><svg style="left:155.4000000000001px;top:5px" width="10" height="14" viewBox="0 0 10 14"><path d="M1.8 5.2 L5 2 L8.2 5.2 M1.8 8.8 L5 12 L8.2 8.8" fill="none" stroke="#262626" stroke-width="1.9" stroke-linecap="round" stroke-linejoin="round"/></svg></div><div class="abs" style="left:-6px;top:253.4px;width:21px;height:24px;border-radius:6px;background:#fff;box-shadow:0 0 0 0.5px rgba(0,0,0,.2),0 1px 1.5px rgba(0,0,0,.25)"><svg class="abs" style="left:6px;top:8px" width="12" height="8" viewBox="0 0 12 8"><path d="M1.5 6 L6 1.5 L10.5 6" fill="none" stroke="#8c8c8c" stroke-width="1.3" stroke-linecap="round" stroke-linejoin="round"/></svg></div><div class="abs" style="left:0;top:353.5px;width:100%;height:25.5px;background:#f6f6f6;border-top:1px solid #9c9c9c"></div><div class="abs" style="left:0;top:362px;width:100%;height:17px;background:#fafafa;border-top:1px solid #e4e4e4"></div><div class="abs" style="left:186.2px;top:366.3px;width:769.4px;height:8.6px;border-radius:4.3px;background:#c2c2c2"></div></div>
</div>

</div>
</body>
</html>
